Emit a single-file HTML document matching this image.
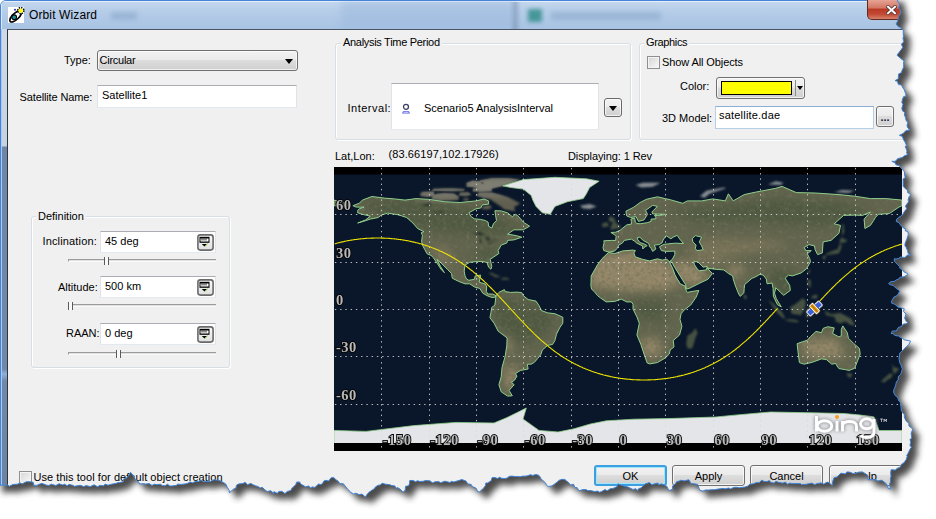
<!DOCTYPE html>
<html><head><meta charset="utf-8">
<style>
*{box-sizing:border-box}
html,body{margin:0;padding:0;width:936px;height:519px;overflow:hidden;background:#fff}
body{position:relative;font-family:"Liberation Sans",sans-serif;font-size:11px;color:#000}
.a{position:absolute;white-space:nowrap}
#win{position:absolute;left:0;top:0;width:936px;height:519px;border-radius:6px 6px 0 0;background:#b0c8e4;border:1px solid #4584d8;overflow:hidden}
#title{position:absolute;left:0;top:0;width:936px;height:29px;background:linear-gradient(#c4d8ee,#b6cde8 35%,#a7c2e3);box-shadow:inset 0 1px 0 #e6eef8,inset 1px 0 0 #dde8f4}
#lframe{position:absolute;left:0;top:28px;width:7px;height:491px;background:linear-gradient(#cfdae6,#c6d2e0 117px,#6e87a6 118px,#7089a8 340px,#8fb0dc 345px,#7089a8 352px,#6a82a0);border-left:1px solid #a8c8f0}
#client{position:absolute;left:7px;top:29px;width:929px;height:490px;background:#f0f0f0;border-top:1px solid #4a5564;border-left:1px solid #2e3540}
.lbl{position:absolute;white-space:nowrap;font-size:11px;line-height:13px;color:#000}
.tb{position:absolute;background:#fff;border:1px solid #abadb3;border-left-color:#e2e3ea;border-right-color:#e2e3ea;border-bottom-color:#e3e9ef;font-size:11px;line-height:13px;padding:2px 0 0 4px}
.grp{position:absolute;border:1px solid #d5dfe5;border-radius:3px;box-shadow:inset 1px 1px 0 #fff,1px 1px 0 #fff}
.grpt{position:absolute;background:#f0f0f0;padding:0 2px;font-size:11px;line-height:13px;white-space:nowrap}
.btn{position:absolute;border:1px solid #707070;border-radius:3px;background:linear-gradient(#f2f2f2,#ebebeb 45%,#dddddd 50%,#cfcfcf);text-align:center;font-size:11px;line-height:13px;padding-top:3px;box-shadow:inset 0 0 0 1px rgba(255,255,255,.7)}
.chk{position:absolute;width:13px;height:13px;border:1px solid #8e8f8f;background:linear-gradient(135deg,#d5d5d5,#f9f9f9);box-shadow:inset 0 0 0 1px #f4f4f4}
.trk{position:absolute;height:3px;border-top:1px solid #9c9c9c;border-left:1px solid #9c9c9c;border-bottom:1px solid #fbfbfb;background:#e0e0e0}
.thm{position:absolute;width:5px;height:8px;border-left:1px solid #5a5a5a;border-right:1px solid #5a5a5a;background:#fafafa}
.sb{position:absolute;width:17px;height:17px}
.sb i{position:absolute;left:1px;top:1px;width:10px;height:6px;background:#000}
.sb b{position:absolute;left:2px;top:2px;width:6px;height:2px;border-left:1px solid #fff;border-right:1px solid #fff}
.sb s{position:absolute;left:3px;top:8px;width:0;height:0;border-left:3px solid transparent;border-right:3px solid transparent;border-top:3px solid #000}
</style></head><body>
<div id="win">
 <div id="title"></div>
 <div class="a" style="left:508px;top:1px;width:12px;height:27px;background:linear-gradient(90deg,rgba(80,100,130,0),rgba(80,100,130,.35),rgba(80,100,130,0))"></div>
 <div class="a" style="left:527px;top:8px;width:14px;height:13px;background:#2c8a86;filter:blur(2px);opacity:.8"></div>
 <div class="a" style="left:550px;top:11px;width:110px;height:8px;background:#86a4c8;filter:blur(2.5px);opacity:.55"></div>
 <div class="a" style="left:110px;top:11px;width:26px;height:8px;background:#8aa8cc;filter:blur(2px);opacity:.6"></div>
 <div class="a" style="left:340px;top:0;width:175px;height:28px;background:#98b6dc;filter:blur(4px);opacity:.45"></div>
 <div id="lframe"></div>
</div>
<div class="a" style="left:8px;top:7px;width:16px;height:16px;background:#fff"></div>
<svg class="a" style="left:8px;top:7px" width="17" height="17" viewBox="0 0 17 17">
 <path d="M9.5,4.2 C6,6 1.5,10.5 1.8,13.6 C2.2,16.2 6.5,15 10,11.5 C11.8,9.8 12.8,8.2 13.2,7" fill="none" stroke="#000" stroke-width="1.7" stroke-linecap="round"/>
 <circle cx="6.2" cy="10.2" r="2.3" fill="#1c9fd0" stroke="#000" stroke-width="1.1"/>
 <rect x="5.6" y="9.6" width="1.6" height="1.6" fill="#2a8a40"/>
 <circle cx="12.8" cy="3.6" r="3" fill="none" stroke="#000" stroke-width="1.6" stroke-dasharray="1.3 1.05"/>
 <circle cx="12.8" cy="3.6" r="2.2" fill="#ffff00"/>
 <circle cx="7" cy="2.7" r="1" fill="#1a2ac0"/>
</svg>
<div class="a" style="left:29px;top:7.5px;font-size:12px;line-height:15px;color:#000;letter-spacing:0.12px">Orbit Wizard</div>
<div class="a" style="left:867px;top:0px;width:50px;height:20px;border:1px solid #5e2a22;border-top:none;border-radius:0 0 5px 5px;background:linear-gradient(#e6a395,#d47866 40%,#bb3a24 50%,#c14a34 75%,#d9826a)"></div>
<svg class="a" style="left:886px;top:5px" width="11" height="10" viewBox="0 0 11 10"><path d="M2,1.8 L9,8.2 M9,1.8 L2,8.2" stroke="#5a3a36" stroke-width="3.6" stroke-linecap="square"/><path d="M2,1.8 L9,8.2 M9,1.8 L2,8.2" stroke="#fff" stroke-width="2" stroke-linecap="square"/></svg>
<div id="client"></div>

<!-- left controls -->
<div class="lbl" style="left:64px;top:54px">Type:</div>
<div class="btn" style="left:97px;top:50px;width:201px;height:21px;text-align:left;padding-left:1.5px;padding-top:3px;letter-spacing:-0.25px">Circular</div>
<div class="a" style="left:285px;top:59px;width:0;height:0;border-left:4px solid transparent;border-right:4px solid transparent;border-top:5px solid #000"></div>
<div class="lbl" style="left:19.5px;top:91px;letter-spacing:-0.12px">Satellite Name:</div>
<div class="tb" style="left:97px;top:85px;width:200px;height:23px;padding-left:4px;padding-top:2.5px">Satellite1</div>

<div class="grp" style="left:31px;top:216px;width:199px;height:152px"></div>
<div class="grpt" style="left:36px;top:210px">Definition</div>

<div class="lbl" style="left:42.5px;top:234.5px;letter-spacing:0.15px">Inclination:</div>
<div class="tb" style="left:100px;top:231px;width:116px;height:22px;padding-top:3px">45 deg</div>
<div class="sb" style="left:197px;top:234px"><svg width="17" height="17" viewBox="0 0 17 17" style="position:absolute;left:0;top:0"><defs><linearGradient id="sbg" x1="0" y1="0" x2="0" y2="1"><stop offset="0" stop-color="#fbfbfb"/><stop offset="1" stop-color="#dedede"/></linearGradient></defs><rect x="0.9" y="0.9" width="15.2" height="15.2" rx="2.5" fill="url(#sbg)" stroke="#6a6a6a" stroke-width="1.6"/><rect x="2.5" y="2.8" width="10" height="6" fill="#000"/><rect x="3.5" y="4.5" width="8" height="3" fill="#fff"/><path d="M5,4.5 V6.5 M7,4.5 V6.5 M9,4.5 V6.5" stroke="#000" stroke-width="0.9"/><path d="M4.8,10 H10 L7.4,12.6 Z" fill="#000"/><path d="M8,12.2 L10.6,9.8" stroke="#7cc020" stroke-width="1"/></svg></div>
<div class="trk" style="left:68px;top:259px;width:148px"></div>
<div class="thm" style="left:104px;top:257px"></div>

<div class="lbl" style="left:58px;top:280.5px">Altitude:</div>
<div class="tb" style="left:100px;top:276px;width:116px;height:22px;padding-top:3px">500 km</div>
<div class="sb" style="left:197px;top:279px"><svg width="17" height="17" viewBox="0 0 17 17" style="position:absolute;left:0;top:0"><defs><linearGradient id="sbg" x1="0" y1="0" x2="0" y2="1"><stop offset="0" stop-color="#fbfbfb"/><stop offset="1" stop-color="#dedede"/></linearGradient></defs><rect x="0.9" y="0.9" width="15.2" height="15.2" rx="2.5" fill="url(#sbg)" stroke="#6a6a6a" stroke-width="1.6"/><rect x="2.5" y="2.8" width="10" height="6" fill="#000"/><rect x="3.5" y="4.5" width="8" height="3" fill="#fff"/><path d="M5,4.5 V6.5 M7,4.5 V6.5 M9,4.5 V6.5" stroke="#000" stroke-width="0.9"/><path d="M4.8,10 H10 L7.4,12.6 Z" fill="#000"/><path d="M8,12.2 L10.6,9.8" stroke="#7cc020" stroke-width="1"/></svg></div>
<div class="trk" style="left:68px;top:304px;width:148px"></div>
<div class="thm" style="left:68px;top:302px"></div>

<div class="lbl" style="left:66px;top:327px">RAAN:</div>
<div class="tb" style="left:100px;top:323px;width:116px;height:22px;padding-top:3px">0 deg</div>
<div class="sb" style="left:197px;top:326px"><svg width="17" height="17" viewBox="0 0 17 17" style="position:absolute;left:0;top:0"><defs><linearGradient id="sbg" x1="0" y1="0" x2="0" y2="1"><stop offset="0" stop-color="#fbfbfb"/><stop offset="1" stop-color="#dedede"/></linearGradient></defs><rect x="0.9" y="0.9" width="15.2" height="15.2" rx="2.5" fill="url(#sbg)" stroke="#6a6a6a" stroke-width="1.6"/><rect x="2.5" y="2.8" width="10" height="6" fill="#000"/><rect x="3.5" y="4.5" width="8" height="3" fill="#fff"/><path d="M5,4.5 V6.5 M7,4.5 V6.5 M9,4.5 V6.5" stroke="#000" stroke-width="0.9"/><path d="M4.8,10 H10 L7.4,12.6 Z" fill="#000"/><path d="M8,12.2 L10.6,9.8" stroke="#7cc020" stroke-width="1"/></svg></div>
<div class="trk" style="left:68px;top:352px;width:148px"></div>
<div class="thm" style="left:116px;top:350px"></div>

<div class="chk" style="left:19px;top:471px"></div>
<div class="lbl" style="left:33.5px;top:471px;letter-spacing:0.05px">Use this tool for default object creation</div>

<!-- analysis time period -->
<div class="grp" style="left:335px;top:43px;width:296px;height:97px"></div>
<div class="grpt" style="left:341px;top:36px;letter-spacing:-0.3px">Analysis Time Period</div>
<div class="lbl" style="left:347.5px;top:102px;letter-spacing:0.5px">Interval:</div>
<div class="tb" style="left:391px;top:83px;width:208px;height:47px"></div>
<svg class="a" style="left:401px;top:103px" width="12" height="12" viewBox="0 0 12 12"><circle cx="5" cy="3.8" r="2.5" fill="#fff" stroke="#3c3c64" stroke-width="1.3"/><path d="M2,8.2 H8 L9,10.5 H1 Z" fill="#5c5ce8"/><rect x="2.5" y="9" width="5" height="0.9" fill="#c8c8ff"/></svg>
<div class="lbl" style="left:424px;top:102px">Scenario5 AnalysisInterval</div>
<div class="btn" style="left:604px;top:98px;width:18px;height:19px;border-color:#6a6a6a"></div>
<div class="a" style="left:609px;top:106px;width:0;height:0;border-left:4px solid transparent;border-right:4px solid transparent;border-top:5px solid #000"></div>

<!-- graphics -->
<div class="grp" style="left:639px;top:43px;width:270px;height:97px"></div>
<div class="grpt" style="left:644px;top:36px;letter-spacing:-0.35px">Graphics</div>
<div class="chk" style="left:647px;top:56px"></div>
<div class="lbl" style="left:662px;top:55.5px;letter-spacing:-0.1px">Show All Objects</div>
<div class="lbl" style="left:680px;top:80px">Color:</div>
<div class="btn" style="left:716px;top:77px;width:89px;height:22px"></div>
<div class="a" style="left:721px;top:81px;width:71px;height:14px;background:#ffff00;border:1px solid #000"></div>
<div class="a" style="left:795px;top:80px;width:1px;height:16px;background:#8a8a8a"></div>
<div class="a" style="left:797px;top:86px;width:0;height:0;border-left:3px solid transparent;border-right:3px solid transparent;border-top:4px solid #000"></div>
<div class="lbl" style="left:662px;top:112px">3D Model:</div>
<div class="tb" style="left:715px;top:106px;width:159px;height:23px;padding-left:3px;padding-top:2px;letter-spacing:0.2px;border-color:#8aaed4 #b4cfe8 #b4cfe8 #b4cfe8">satellite.dae</div>
<div class="btn" style="left:876px;top:106px;width:18px;height:21px;padding-top:4px;letter-spacing:0px;font-weight:bold;color:#202040">...</div>

<div class="lbl" style="left:335px;top:150px">Lat,Lon:</div>
<div class="lbl" style="left:388.5px;top:148px;letter-spacing:0.1px">(83.66197,102.17926)</div>
<div class="lbl" style="left:568px;top:149.5px;letter-spacing:-0.1px">Displaying: 1 Rev</div>

<svg id="map" width="568" height="284" viewBox="0 0 568 284" style="position:absolute;left:334px;top:167px">
<defs>
<clipPath id="archclip"><path d="M86.8,29.2 L94.7,30.0 L101.0,28.4 L99.4,24.5 L88.4,24.8 L86.0,26.8Z M97.8,32.3 L105.7,33.9 L116.8,33.4 L124.6,33.1 L124.6,29.2 L119.9,26.5 L110.4,26.0 L102.6,26.8 L97.8,30.0Z M124.6,28.4 L132.5,29.2 L137.3,27.6 L134.1,25.2 L126.2,25.6Z M128.6,33.1 L134.1,33.9 L134.9,31.6 L130.2,31.2Z M97.8,23.7 L107.3,24.0 L118.3,24.3 L129.4,24.0 L131.0,22.1 L119.9,21.3 L110.4,21.3 L99.4,21.8Z M132.5,19.7 L142.0,20.5 L148.3,18.1 L146.7,14.2 L138.8,13.4 L132.5,15.8Z M138.8,24.5 L148.3,24.8 L157.8,24.3 L157.8,21.3 L145.2,20.8 L138.8,21.8Z M142.0,21.6 L157.8,21.8 L165.7,19.7 L173.6,18.1 L186.2,12.6 L173.6,11.0 L157.8,11.0 L145.2,13.4 L149.9,16.6 L142.0,18.1Z M142.0,28.4 L149.9,31.2 L156.2,32.3 L160.9,35.5 L167.2,39.8 L170.4,42.6 L181.4,44.2 L179.9,40.2 L186.2,36.6 L178.3,32.3 L173.6,30.0 L165.7,27.6 L157.8,25.6 L145.2,25.6Z M146.7,41.8 L149.9,38.7 L156.2,37.9 L157.8,41.0 L153.0,42.6Z"/></clipPath>
<clipPath id="landclip"><path d="M18.9,38.7 L25.2,36.3 L28.4,33.1 L37.9,29.5 L50.5,31.1 L61.5,32.0 L71.0,33.1 L82.0,31.6 L94.7,32.3 L110.4,34.7 L126.2,35.5 L134.1,34.7 L142.0,33.9 L149.9,32.0 L154.6,33.9 L154.6,37.1 L148.3,37.9 L146.7,41.0 L142.0,41.8 L134.9,45.8 L137.3,49.7 L140.4,51.8 L146.7,52.4 L151.5,53.6 L154.1,55.2 L154.6,59.2 L157.8,61.1 L159.4,56.8 L162.5,53.6 L161.7,48.9 L160.9,43.7 L167.2,43.9 L173.6,45.8 L178.3,49.7 L181.4,47.3 L183.0,48.1 L186.2,51.3 L189.3,55.2 L195.6,59.2 L189.3,62.8 L179.9,62.8 L173.6,67.1 L182.2,68.6 L187.8,70.2 L179.9,72.9 L173.6,73.4 L172.8,76.0 L167.2,78.1 L164.1,83.6 L164.9,86.5 L156.2,92.3 L157.8,99.4 L157.0,102.2 L154.6,100.2 L153.0,95.5 L149.9,94.7 L143.6,94.4 L135.7,95.3 L131.0,98.1 L130.2,104.1 L131.0,108.9 L132.5,112.0 L134.9,113.3 L140.4,112.3 L141.2,108.9 L146.7,108.1 L145.2,115.2 L151.5,117.1 L152.7,119.9 L152.3,124.6 L153.8,127.0 L158.6,127.0 L162.0,128.6 L160.9,130.2 L157.8,130.5 L153.0,128.6 L148.8,126.2 L145.9,121.5 L140.4,119.9 L135.7,116.8 L131.0,116.8 L124.6,114.4 L118.3,111.2 L117.5,106.5 L113.6,102.6 L107.3,96.2 L102.9,92.3 L106.5,99.4 L110.4,105.7 L107.3,102.6 L104.1,97.8 L99.4,90.7 L97.0,88.4 L93.1,86.8 L90.7,82.4 L88.4,78.1 L87.6,74.2 L88.4,68.6 L87.3,65.6 L89.9,64.7 L83.6,61.5 L78.9,56.0 L72.6,50.5 L67.8,48.9 L63.1,47.6 L53.6,46.1 L47.3,48.1 L44.2,50.5 L36.3,52.1 L28.4,54.7 L23.7,56.0 L31.6,52.9 L36.3,49.2 L28.4,47.3 L23.7,45.8 L23.7,43.4 L25.2,41.8 L30.0,40.2 L22.1,40.1Z M162.0,128.6 L164.9,125.4 L170.4,122.6 L171.2,124.6 L176.7,125.4 L183.0,125.1 L187.8,125.7 L189.3,128.6 L194.1,132.5 L202.0,134.1 L205.1,138.8 L207.5,143.6 L213.8,145.9 L220.9,146.7 L228.8,150.2 L228.8,156.2 L225.6,160.9 L222.5,167.2 L220.9,173.6 L218.5,177.5 L213.8,178.3 L208.3,183.0 L206.7,187.8 L203.5,191.7 L200.4,195.3 L197.2,197.2 L193.3,197.2 L194.1,202.0 L186.2,203.5 L181.4,206.7 L183.0,209.1 L180.7,213.0 L177.5,215.4 L180.2,217.7 L175.1,223.3 L175.9,224.8 L178.3,228.8 L173.6,229.1 L167.2,224.8 L164.9,217.7 L167.2,209.8 L168.0,200.4 L171.2,189.3 L172.8,178.3 L173.1,170.9 L164.1,164.1 L160.1,156.2 L155.9,150.7 L157.0,145.2 L157.8,140.4 L160.9,138.1 L161.7,131.0Z M274.5,85.5 L268.2,91.5 L263.5,97.8 L257.2,108.9 L256.9,118.8 L257.7,122.3 L260.3,124.6 L263.5,128.6 L266.6,131.0 L272.2,134.9 L280.8,134.4 L287.2,132.1 L292.7,134.9 L297.4,134.9 L299.0,137.3 L299.0,142.0 L302.9,149.9 L305.3,156.2 L302.9,168.0 L306.9,177.5 L310.0,187.0 L313.2,196.0 L315.6,196.9 L323.4,195.6 L331.3,190.9 L335.3,187.0 L336.1,183.0 L340.0,179.9 L339.2,173.6 L345.5,168.0 L347.9,159.4 L346.0,152.3 L347.1,146.7 L350.3,142.8 L356.6,138.1 L362.1,130.2 L364.9,123.4 L359.7,124.2 L353.4,125.4 L352.3,123.9 L351.1,119.1 L346.3,116.8 L343.2,112.0 L340.8,107.3 L339.2,102.6 L336.9,97.8 L335.3,94.7 L332.9,92.3 L328.2,93.1 L323.4,91.8 L315.6,93.9 L308.5,92.3 L301.4,89.9 L299.8,86.0 L301.4,83.6 L299.0,83.1 L288.7,83.9 L280.8,86.5Z M275.2,85.2 L269.8,83.6 L269.0,80.5 L270.1,75.7 L269.8,73.8 L277.7,73.4 L281.6,73.5 L282.1,69.4 L280.1,67.4 L276.9,65.5 L281.6,65.2 L286.4,63.1 L288.7,61.1 L291.1,59.2 L292.7,57.9 L297.4,57.1 L297.4,54.4 L296.9,52.1 L300.6,51.0 L301.4,55.2 L302.9,56.5 L306.1,56.8 L313.2,55.7 L317.1,54.4 L317.1,52.1 L321.9,51.8 L321.9,49.7 L320.3,48.6 L328.2,48.1 L331.3,47.3 L318.7,46.9 L317.9,45.0 L323.4,39.4 L318.7,38.3 L311.6,43.4 L313.5,47.3 L310.0,52.9 L304.5,54.4 L302.1,49.7 L296.6,50.5 L292.7,48.9 L291.9,44.2 L299.8,40.2 L306.1,35.5 L312.4,32.3 L323.4,29.8 L331.3,31.6 L336.1,32.7 L348.7,36.3 L353.4,33.9 L367.6,33.9 L378.7,31.9 L391.3,33.9 L394.4,26.8 L399.2,33.9 L410.2,27.6 L421.3,25.2 L441.8,21.3 L448.1,19.4 L462.3,25.6 L481.2,26.0 L504.9,27.6 L520.7,29.2 L536.4,31.6 L552.2,31.6 L568.0,33.1 L568.0,38.7 L564.8,40.2 L555.4,46.5 L544.3,47.3 L541.2,50.8 L539.6,53.6 L536.4,58.4 L530.9,61.5 L530.1,52.1 L536.4,45.0 L528.6,48.4 L520.7,48.1 L509.6,48.4 L500.2,56.8 L506.5,58.4 L504.9,66.3 L497.0,73.4 L489.1,74.9 L488.3,86.0 L483.6,87.6 L481.2,82.8 L480.4,78.9 L474.9,77.6 L470.2,80.5 L471.8,83.6 L477.3,83.6 L473.3,86.8 L475.7,91.5 L476.5,94.7 L472.5,101.8 L467.0,106.0 L458.3,108.9 L454.4,108.1 L451.2,111.2 L455.7,118.3 L456.3,123.4 L449.7,128.3 L446.5,125.4 L441.8,120.7 L440.5,126.2 L442.3,131.7 L447.3,139.9 L443.4,137.6 L439.4,129.4 L439.1,121.5 L438.1,116.0 L433.1,116.8 L432.3,112.0 L429.2,108.1 L426.0,107.3 L420.5,110.4 L418.1,111.2 L410.7,117.5 L410.2,121.5 L409.9,125.7 L406.3,129.4 L404.7,127.0 L401.5,119.1 L399.2,112.0 L398.7,108.9 L394.4,106.5 L392.4,104.9 L389.7,102.9 L381.0,102.2 L373.9,101.3 L373.1,99.4 L369.2,100.2 L363.7,94.7 L359.7,94.7 L360.5,97.8 L363.7,102.6 L365.3,103.8 L372.4,102.9 L372.8,100.7 L378.4,106.5 L373.9,112.3 L366.0,116.0 L355.0,121.5 L352.3,122.0 L351.5,117.5 L345.5,108.1 L339.2,97.8 L338.4,95.5 L335.3,94.7 L338.4,92.3 L340.8,87.6 L340.8,84.1 L332.1,84.4 L327.4,83.6 L325.5,79.7 L329.8,77.3 L332.9,77.0 L340.8,76.2 L349.5,76.5 L345.5,71.8 L343.2,68.3 L339.2,70.2 L336.9,71.8 L332.1,68.6 L329.0,73.1 L328.2,75.7 L325.0,77.6 L320.3,78.1 L321.9,82.0 L318.7,84.4 L317.1,81.3 L315.6,79.7 L314.8,76.5 L309.2,73.4 L305.8,70.2 L303.4,70.5 L303.7,72.6 L306.1,75.7 L309.2,76.5 L313.2,78.6 L310.0,80.5 L308.8,82.0 L308.5,78.9 L302.9,76.2 L300.6,74.2 L297.4,72.1 L290.3,73.4 L288.7,75.7 L284.8,78.1 L283.2,81.3 L280.8,83.9Z M463.1,176.7 L463.9,183.8 L465.4,195.6 L470.2,197.2 L478.1,195.3 L487.5,191.9 L492.3,192.5 L497.8,197.2 L501.7,196.4 L502.5,198.2 L504.9,201.6 L511.2,202.6 L515.1,203.5 L520.7,201.2 L526.2,187.0 L525.4,181.4 L519.9,176.7 L514.4,171.2 L513.3,165.7 L508.8,158.9 L507.3,162.5 L507.3,168.8 L504.9,169.9 L498.6,166.5 L500.2,160.9 L493.8,159.7 L489.1,161.4 L487.5,165.7 L482.0,164.4 L476.5,169.6 L473.3,173.2 L468.6,174.7Z M0.0,33.1 L7.9,35.5 L15.8,37.1 L12.6,39.4 L0.0,38.7Z"/></clipPath>
<filter id="tex2" x="0" y="0" width="100%" height="100%"><feTurbulence type="fractalNoise" baseFrequency="0.28" numOctaves="3" seed="7"/><feColorMatrix type="matrix" values="0 0 0 0 0.12  0 0 0 0 0.14  0 0 0 0 0.08  1.6 0 0 0 -0.75"/></filter>
<filter id="tex3" x="0" y="0" width="100%" height="100%"><feTurbulence type="fractalNoise" baseFrequency="0.22" numOctaves="2" seed="11"/><feColorMatrix type="matrix" values="0 0 0 0 0.75  0 0 0 0 0.72  0 0 0 0 0.6  1.5 0 0 0 -0.8"/></filter>
<filter id="b1" x="-20%" y="-20%" width="140%" height="140%"><feGaussianBlur stdDeviation="1"/></filter>
<filter id="b4" x="-20%" y="-20%" width="140%" height="140%"><feGaussianBlur stdDeviation="5"/></filter>
<filter id="tex" x="0" y="0" width="100%" height="100%"><feTurbulence type="fractalNoise" baseFrequency="0.35" numOctaves="2" seed="4"/><feColorMatrix type="matrix" values="0 0 0 0 0.5  0 0 0 0 0.5  0 0 0 0 0.45  0 0 0 -1.6 1.1"/></filter>
</defs>
<rect width="568.0" height="284.0" fill="#0a172a"/>
<path d="M353.4,181.4 L358.2,181.4 L362.1,168.8 L363.7,166.5 L361.6,160.9 L358.2,165.7 L353.4,168.8 L352.3,176.7Z M275.0,63.1 L286.4,61.2 L286.7,58.9 L284.0,57.6 L281.6,55.2 L280.8,52.1 L277.7,49.5 L276.1,49.5 L274.5,51.3 L275.3,54.4 L279.3,55.5 L276.1,60.0 L277.7,60.7Z M268.2,60.3 L274.5,59.6 L274.5,56.8 L272.2,54.9 L268.2,56.5Z M490.5,88.4 L497.0,87.6 L504.9,86.5 L507.3,81.3 L507.3,76.5 L504.9,78.1 L504.1,82.0 L499.4,83.6 L493.8,86.0Z M504.9,75.7 L507.3,70.2 L513.6,73.4 L510.4,75.7Z M488.6,89.1 L492.0,89.1 L490.7,93.1 L489.1,92.3Z M508.0,69.4 L510.4,64.7 L509.6,56.8 L508.4,56.8 L508.0,63.1Z M473.6,105.7 L474.9,107.4 L476.5,102.6 L475.7,102.1Z M473.3,112.8 L476.8,112.8 L476.5,119.9 L479.6,121.5 L474.3,119.6Z M476.5,131.0 L482.8,131.7 L483.6,127.5 L478.9,128.6Z M456.0,139.6 L457.6,146.7 L467.0,148.3 L471.0,140.4 L471.8,134.1 L468.6,131.0 L465.4,134.1 L459.1,138.8Z M434.4,133.3 L438.6,135.7 L448.1,145.2 L451.2,151.2 L448.9,151.2 L443.4,145.9 L437.8,138.1Z M450.0,152.7 L459.1,152.3 L464.7,154.1 L464.3,155.4 L454.4,154.3Z M472.5,150.7 L471.8,143.6 L474.1,140.7 L481.2,139.6 L475.7,141.2 L478.5,143.6 L475.7,144.4 L478.1,149.9 L474.9,148.3 L474.1,150.7Z M490.7,143.6 L497.0,147.2 L506.5,145.9 L516.7,151.5 L521.5,158.6 L515.9,157.8 L511.2,154.6 L506.5,156.5 L501.7,154.6 L500.9,149.9 L492.3,148.3Z M512.3,206.2 L518.0,206.5 L517.5,210.2 L514.4,210.6Z M556.5,196.3 L560.9,200.4 L565.6,201.5 L563.3,204.0 L560.1,207.5 L559.3,204.3 L558.2,203.5 L559.3,200.4Z M556.5,205.9 L558.8,207.8 L557.0,211.1 L554.1,212.2 L550.6,215.5 L546.7,214.6 L549.9,211.4 L554.6,207.5Z M409.9,126.5 L413.1,130.2 L411.2,132.7 L409.9,131.0Z M149.9,107.6 L157.0,105.6 L166.9,110.1 L161.7,110.6 L154.6,106.3Z M166.5,112.8 L175.9,112.8 L173.6,110.8 L169.1,110.6Z" fill="#4d5844" filter="url(#b1)" opacity="0.9"/>
<path d="M246.1,38.7 L255.6,37.1 L262.7,39.4 L255.6,42.0 L248.5,41.3Z M301.4,18.1 L309.2,15.8 L326.6,15.8 L318.7,19.7 L307.7,20.5Z M366.0,29.2 L372.4,23.7 L389.7,20.5 L392.1,21.3 L375.5,26.8 L370.8,30.8Z M433.9,17.4 L441.8,14.2 L449.7,15.8 L446.5,18.1Z M500.2,25.2 L508.0,22.9 L520.7,23.7 L514.4,26.0Z" fill="#a8acac" filter="url(#b1)" opacity="0.8"/>
<path d="M86.8,29.2 L94.7,30.0 L101.0,28.4 L99.4,24.5 L88.4,24.8 L86.0,26.8Z M97.8,32.3 L105.7,33.9 L116.8,33.4 L124.6,33.1 L124.6,29.2 L119.9,26.5 L110.4,26.0 L102.6,26.8 L97.8,30.0Z M124.6,28.4 L132.5,29.2 L137.3,27.6 L134.1,25.2 L126.2,25.6Z M128.6,33.1 L134.1,33.9 L134.9,31.6 L130.2,31.2Z M97.8,23.7 L107.3,24.0 L118.3,24.3 L129.4,24.0 L131.0,22.1 L119.9,21.3 L110.4,21.3 L99.4,21.8Z M132.5,19.7 L142.0,20.5 L148.3,18.1 L146.7,14.2 L138.8,13.4 L132.5,15.8Z M138.8,24.5 L148.3,24.8 L157.8,24.3 L157.8,21.3 L145.2,20.8 L138.8,21.8Z M142.0,21.6 L157.8,21.8 L165.7,19.7 L173.6,18.1 L186.2,12.6 L173.6,11.0 L157.8,11.0 L145.2,13.4 L149.9,16.6 L142.0,18.1Z M142.0,28.4 L149.9,31.2 L156.2,32.3 L160.9,35.5 L167.2,39.8 L170.4,42.6 L181.4,44.2 L179.9,40.2 L186.2,36.6 L178.3,32.3 L173.6,30.0 L165.7,27.6 L157.8,25.6 L145.2,25.6Z M146.7,41.8 L149.9,38.7 L156.2,37.9 L157.8,41.0 L153.0,42.6Z" fill="#605e50" filter="url(#b1)"/>
<g clip-path="url(#archclip)"><path d="M134.1,28.4 L189.3,28.4 L186.2,9.5 L126.2,9.5Z M86.8,31.6 L126.2,31.6 L126.2,20.5 L86.8,20.5Z" fill="#c8cac8" filter="url(#b4)" opacity="0.3"/></g>
<path d="M18.9,38.7 L25.2,36.3 L28.4,33.1 L37.9,29.5 L50.5,31.1 L61.5,32.0 L71.0,33.1 L82.0,31.6 L94.7,32.3 L110.4,34.7 L126.2,35.5 L134.1,34.7 L142.0,33.9 L149.9,32.0 L154.6,33.9 L154.6,37.1 L148.3,37.9 L146.7,41.0 L142.0,41.8 L134.9,45.8 L137.3,49.7 L140.4,51.8 L146.7,52.4 L151.5,53.6 L154.1,55.2 L154.6,59.2 L157.8,61.1 L159.4,56.8 L162.5,53.6 L161.7,48.9 L160.9,43.7 L167.2,43.9 L173.6,45.8 L178.3,49.7 L181.4,47.3 L183.0,48.1 L186.2,51.3 L189.3,55.2 L195.6,59.2 L189.3,62.8 L179.9,62.8 L173.6,67.1 L182.2,68.6 L187.8,70.2 L179.9,72.9 L173.6,73.4 L172.8,76.0 L167.2,78.1 L164.1,83.6 L164.9,86.5 L156.2,92.3 L157.8,99.4 L157.0,102.2 L154.6,100.2 L153.0,95.5 L149.9,94.7 L143.6,94.4 L135.7,95.3 L131.0,98.1 L130.2,104.1 L131.0,108.9 L132.5,112.0 L134.9,113.3 L140.4,112.3 L141.2,108.9 L146.7,108.1 L145.2,115.2 L151.5,117.1 L152.7,119.9 L152.3,124.6 L153.8,127.0 L158.6,127.0 L162.0,128.6 L160.9,130.2 L157.8,130.5 L153.0,128.6 L148.8,126.2 L145.9,121.5 L140.4,119.9 L135.7,116.8 L131.0,116.8 L124.6,114.4 L118.3,111.2 L117.5,106.5 L113.6,102.6 L107.3,96.2 L102.9,92.3 L106.5,99.4 L110.4,105.7 L107.3,102.6 L104.1,97.8 L99.4,90.7 L97.0,88.4 L93.1,86.8 L90.7,82.4 L88.4,78.1 L87.6,74.2 L88.4,68.6 L87.3,65.6 L89.9,64.7 L83.6,61.5 L78.9,56.0 L72.6,50.5 L67.8,48.9 L63.1,47.6 L53.6,46.1 L47.3,48.1 L44.2,50.5 L36.3,52.1 L28.4,54.7 L23.7,56.0 L31.6,52.9 L36.3,49.2 L28.4,47.3 L23.7,45.8 L23.7,43.4 L25.2,41.8 L30.0,40.2 L22.1,40.1Z M162.0,128.6 L164.9,125.4 L170.4,122.6 L171.2,124.6 L176.7,125.4 L183.0,125.1 L187.8,125.7 L189.3,128.6 L194.1,132.5 L202.0,134.1 L205.1,138.8 L207.5,143.6 L213.8,145.9 L220.9,146.7 L228.8,150.2 L228.8,156.2 L225.6,160.9 L222.5,167.2 L220.9,173.6 L218.5,177.5 L213.8,178.3 L208.3,183.0 L206.7,187.8 L203.5,191.7 L200.4,195.3 L197.2,197.2 L193.3,197.2 L194.1,202.0 L186.2,203.5 L181.4,206.7 L183.0,209.1 L180.7,213.0 L177.5,215.4 L180.2,217.7 L175.1,223.3 L175.9,224.8 L178.3,228.8 L173.6,229.1 L167.2,224.8 L164.9,217.7 L167.2,209.8 L168.0,200.4 L171.2,189.3 L172.8,178.3 L173.1,170.9 L164.1,164.1 L160.1,156.2 L155.9,150.7 L157.0,145.2 L157.8,140.4 L160.9,138.1 L161.7,131.0Z M274.5,85.5 L268.2,91.5 L263.5,97.8 L257.2,108.9 L256.9,118.8 L257.7,122.3 L260.3,124.6 L263.5,128.6 L266.6,131.0 L272.2,134.9 L280.8,134.4 L287.2,132.1 L292.7,134.9 L297.4,134.9 L299.0,137.3 L299.0,142.0 L302.9,149.9 L305.3,156.2 L302.9,168.0 L306.9,177.5 L310.0,187.0 L313.2,196.0 L315.6,196.9 L323.4,195.6 L331.3,190.9 L335.3,187.0 L336.1,183.0 L340.0,179.9 L339.2,173.6 L345.5,168.0 L347.9,159.4 L346.0,152.3 L347.1,146.7 L350.3,142.8 L356.6,138.1 L362.1,130.2 L364.9,123.4 L359.7,124.2 L353.4,125.4 L352.3,123.9 L351.1,119.1 L346.3,116.8 L343.2,112.0 L340.8,107.3 L339.2,102.6 L336.9,97.8 L335.3,94.7 L332.9,92.3 L328.2,93.1 L323.4,91.8 L315.6,93.9 L308.5,92.3 L301.4,89.9 L299.8,86.0 L301.4,83.6 L299.0,83.1 L288.7,83.9 L280.8,86.5Z M275.2,85.2 L269.8,83.6 L269.0,80.5 L270.1,75.7 L269.8,73.8 L277.7,73.4 L281.6,73.5 L282.1,69.4 L280.1,67.4 L276.9,65.5 L281.6,65.2 L286.4,63.1 L288.7,61.1 L291.1,59.2 L292.7,57.9 L297.4,57.1 L297.4,54.4 L296.9,52.1 L300.6,51.0 L301.4,55.2 L302.9,56.5 L306.1,56.8 L313.2,55.7 L317.1,54.4 L317.1,52.1 L321.9,51.8 L321.9,49.7 L320.3,48.6 L328.2,48.1 L331.3,47.3 L318.7,46.9 L317.9,45.0 L323.4,39.4 L318.7,38.3 L311.6,43.4 L313.5,47.3 L310.0,52.9 L304.5,54.4 L302.1,49.7 L296.6,50.5 L292.7,48.9 L291.9,44.2 L299.8,40.2 L306.1,35.5 L312.4,32.3 L323.4,29.8 L331.3,31.6 L336.1,32.7 L348.7,36.3 L353.4,33.9 L367.6,33.9 L378.7,31.9 L391.3,33.9 L394.4,26.8 L399.2,33.9 L410.2,27.6 L421.3,25.2 L441.8,21.3 L448.1,19.4 L462.3,25.6 L481.2,26.0 L504.9,27.6 L520.7,29.2 L536.4,31.6 L552.2,31.6 L568.0,33.1 L568.0,38.7 L564.8,40.2 L555.4,46.5 L544.3,47.3 L541.2,50.8 L539.6,53.6 L536.4,58.4 L530.9,61.5 L530.1,52.1 L536.4,45.0 L528.6,48.4 L520.7,48.1 L509.6,48.4 L500.2,56.8 L506.5,58.4 L504.9,66.3 L497.0,73.4 L489.1,74.9 L488.3,86.0 L483.6,87.6 L481.2,82.8 L480.4,78.9 L474.9,77.6 L470.2,80.5 L471.8,83.6 L477.3,83.6 L473.3,86.8 L475.7,91.5 L476.5,94.7 L472.5,101.8 L467.0,106.0 L458.3,108.9 L454.4,108.1 L451.2,111.2 L455.7,118.3 L456.3,123.4 L449.7,128.3 L446.5,125.4 L441.8,120.7 L440.5,126.2 L442.3,131.7 L447.3,139.9 L443.4,137.6 L439.4,129.4 L439.1,121.5 L438.1,116.0 L433.1,116.8 L432.3,112.0 L429.2,108.1 L426.0,107.3 L420.5,110.4 L418.1,111.2 L410.7,117.5 L410.2,121.5 L409.9,125.7 L406.3,129.4 L404.7,127.0 L401.5,119.1 L399.2,112.0 L398.7,108.9 L394.4,106.5 L392.4,104.9 L389.7,102.9 L381.0,102.2 L373.9,101.3 L373.1,99.4 L369.2,100.2 L363.7,94.7 L359.7,94.7 L360.5,97.8 L363.7,102.6 L365.3,103.8 L372.4,102.9 L372.8,100.7 L378.4,106.5 L373.9,112.3 L366.0,116.0 L355.0,121.5 L352.3,122.0 L351.5,117.5 L345.5,108.1 L339.2,97.8 L338.4,95.5 L335.3,94.7 L338.4,92.3 L340.8,87.6 L340.8,84.1 L332.1,84.4 L327.4,83.6 L325.5,79.7 L329.8,77.3 L332.9,77.0 L340.8,76.2 L349.5,76.5 L345.5,71.8 L343.2,68.3 L339.2,70.2 L336.9,71.8 L332.1,68.6 L329.0,73.1 L328.2,75.7 L325.0,77.6 L320.3,78.1 L321.9,82.0 L318.7,84.4 L317.1,81.3 L315.6,79.7 L314.8,76.5 L309.2,73.4 L305.8,70.2 L303.4,70.5 L303.7,72.6 L306.1,75.7 L309.2,76.5 L313.2,78.6 L310.0,80.5 L308.8,82.0 L308.5,78.9 L302.9,76.2 L300.6,74.2 L297.4,72.1 L290.3,73.4 L288.7,75.7 L284.8,78.1 L283.2,81.3 L280.8,83.9Z M463.1,176.7 L463.9,183.8 L465.4,195.6 L470.2,197.2 L478.1,195.3 L487.5,191.9 L492.3,192.5 L497.8,197.2 L501.7,196.4 L502.5,198.2 L504.9,201.6 L511.2,202.6 L515.1,203.5 L520.7,201.2 L526.2,187.0 L525.4,181.4 L519.9,176.7 L514.4,171.2 L513.3,165.7 L508.8,158.9 L507.3,162.5 L507.3,168.8 L504.9,169.9 L498.6,166.5 L500.2,160.9 L493.8,159.7 L489.1,161.4 L487.5,165.7 L482.0,164.4 L476.5,169.6 L473.3,173.2 L468.6,174.7Z M0.0,33.1 L7.9,35.5 L15.8,37.1 L12.6,39.4 L0.0,38.7Z" fill="#62644d"/>
<g clip-path="url(#landclip)">
<path d="M255.6,119.9 L255.6,97.8 L271.4,86.8 L299.8,85.2 L323.4,89.9 L337.6,101.0 L347.1,116.8 L331.3,123.1 L307.7,124.6 L284.0,123.1Z M339.2,97.8 L347.1,93.1 L359.7,96.2 L372.4,105.7 L373.9,113.6 L355.0,119.9 L345.5,110.4Z M467.0,173.6 L501.7,172.0 L512.8,189.3 L497.0,190.9 L471.8,189.3Z M306.1,172.0 L325.0,172.0 L328.2,186.2 L310.8,190.9Z M172.0,198.8 L184.6,202.0 L179.9,220.9 L170.4,220.9Z M170.4,165.7 L176.7,167.2 L178.3,184.6 L172.0,186.2Z M391.3,101.0 L407.1,97.8 L410.2,107.3 L397.6,110.4Z" fill="#948667" filter="url(#b4)"/>
<path d="M97.8,78.9 L113.6,78.9 L119.9,94.7 L110.4,101.0 L101.0,91.5Z M353.4,83.6 L370.8,72.6 L386.6,71.0 L410.2,72.6 L433.9,72.6 L449.7,75.7 L457.6,80.5 L429.2,83.6 L402.3,88.4 L381.8,99.4 L362.9,94.7Z" fill="#948667" filter="url(#b4)" opacity="0.45"/>
<path d="M160.9,129.4 L205.1,137.3 L220.9,151.5 L208.3,170.4 L186.2,176.7 L165.7,164.1 L157.8,148.3Z M160.9,129.4 L205.1,137.3 L220.9,151.5 L208.3,170.4 L186.2,176.7 L165.7,164.1 L157.8,148.3Z M296.6,132.5 L331.3,134.1 L331.3,154.6 L304.5,151.5Z M433.9,102.6 L457.6,102.6 L473.3,134.1 L520.7,154.6 L441.8,154.6Z M23.7,34.7 L63.1,31.6 L126.2,37.9 L165.7,50.5 L189.3,63.1 L157.8,69.4 L94.7,63.1 L47.3,50.5Z M331.3,44.2 L378.7,37.9 L441.8,31.6 L504.9,34.7 L536.4,44.2 L489.1,60.0 L426.0,55.2 L362.9,55.2Z M149.9,78.9 L165.7,78.9 L157.8,94.7 L138.8,91.5Z" fill="#4a553c" filter="url(#b4)" opacity="0.7"/>
<path d="M134.1,28.4 L189.3,28.4 L186.2,9.5 L126.2,9.5Z M86.8,31.6 L126.2,31.6 L126.2,20.5 L86.8,20.5Z" fill="#b0b2b0" filter="url(#b4)" opacity="0.55"/>
<rect width="568.0" height="284.0" filter="url(#tex2)" opacity="1"/>
<rect width="568.0" height="284.0" filter="url(#tex3)" opacity="0.18"/>
</g>
<path d="M138.8,65.5 L145.2,64.7 L150.7,67.8 L146.7,68.6Z M145.2,69.4 L148.3,75.7 L145.9,76.2Z M151.5,69.4 L157.0,71.8 L153.8,74.2 L151.5,71.0Z M153.0,75.7 L159.4,74.5 L156.2,76.5Z M157.8,73.2 L164.1,72.6 L162.5,73.7Z M86.8,37.9 L97.8,36.3 L94.7,39.4Z M97.8,44.2 L110.4,45.0 L107.3,46.1Z" fill="#1a2420" opacity="0.8" filter="url(#b1)"/>
<path d="M18.9,38.7 L25.2,36.3 L28.4,33.1 L37.9,29.5 L50.5,31.1 L61.5,32.0 L71.0,33.1 L82.0,31.6 L94.7,32.3 L110.4,34.7 L126.2,35.5 L134.1,34.7 L142.0,33.9 L149.9,32.0 L154.6,33.9 L154.6,37.1 L148.3,37.9 L146.7,41.0 L142.0,41.8 L134.9,45.8 L137.3,49.7 L140.4,51.8 L146.7,52.4 L151.5,53.6 L154.1,55.2 L154.6,59.2 L157.8,61.1 L159.4,56.8 L162.5,53.6 L161.7,48.9 L160.9,43.7 L167.2,43.9 L173.6,45.8 L178.3,49.7 L181.4,47.3 L183.0,48.1 L186.2,51.3 L189.3,55.2 L195.6,59.2 L189.3,62.8 L179.9,62.8 L173.6,67.1 L182.2,68.6 L187.8,70.2 L179.9,72.9 L173.6,73.4 L172.8,76.0 L167.2,78.1 L164.1,83.6 L164.9,86.5 L156.2,92.3 L157.8,99.4 L157.0,102.2 L154.6,100.2 L153.0,95.5 L149.9,94.7 L143.6,94.4 L135.7,95.3 L131.0,98.1 L130.2,104.1 L131.0,108.9 L132.5,112.0 L134.9,113.3 L140.4,112.3 L141.2,108.9 L146.7,108.1 L145.2,115.2 L151.5,117.1 L152.7,119.9 L152.3,124.6 L153.8,127.0 L158.6,127.0 L162.0,128.6 L160.9,130.2 L157.8,130.5 L153.0,128.6 L148.8,126.2 L145.9,121.5 L140.4,119.9 L135.7,116.8 L131.0,116.8 L124.6,114.4 L118.3,111.2 L117.5,106.5 L113.6,102.6 L107.3,96.2 L102.9,92.3 L106.5,99.4 L110.4,105.7 L107.3,102.6 L104.1,97.8 L99.4,90.7 L97.0,88.4 L93.1,86.8 L90.7,82.4 L88.4,78.1 L87.6,74.2 L88.4,68.6 L87.3,65.6 L89.9,64.7 L83.6,61.5 L78.9,56.0 L72.6,50.5 L67.8,48.9 L63.1,47.6 L53.6,46.1 L47.3,48.1 L44.2,50.5 L36.3,52.1 L28.4,54.7 L23.7,56.0 L31.6,52.9 L36.3,49.2 L28.4,47.3 L23.7,45.8 L23.7,43.4 L25.2,41.8 L30.0,40.2 L22.1,40.1Z M162.0,128.6 L164.9,125.4 L170.4,122.6 L171.2,124.6 L176.7,125.4 L183.0,125.1 L187.8,125.7 L189.3,128.6 L194.1,132.5 L202.0,134.1 L205.1,138.8 L207.5,143.6 L213.8,145.9 L220.9,146.7 L228.8,150.2 L228.8,156.2 L225.6,160.9 L222.5,167.2 L220.9,173.6 L218.5,177.5 L213.8,178.3 L208.3,183.0 L206.7,187.8 L203.5,191.7 L200.4,195.3 L197.2,197.2 L193.3,197.2 L194.1,202.0 L186.2,203.5 L181.4,206.7 L183.0,209.1 L180.7,213.0 L177.5,215.4 L180.2,217.7 L175.1,223.3 L175.9,224.8 L178.3,228.8 L173.6,229.1 L167.2,224.8 L164.9,217.7 L167.2,209.8 L168.0,200.4 L171.2,189.3 L172.8,178.3 L173.1,170.9 L164.1,164.1 L160.1,156.2 L155.9,150.7 L157.0,145.2 L157.8,140.4 L160.9,138.1 L161.7,131.0Z M274.5,85.5 L268.2,91.5 L263.5,97.8 L257.2,108.9 L256.9,118.8 L257.7,122.3 L260.3,124.6 L263.5,128.6 L266.6,131.0 L272.2,134.9 L280.8,134.4 L287.2,132.1 L292.7,134.9 L297.4,134.9 L299.0,137.3 L299.0,142.0 L302.9,149.9 L305.3,156.2 L302.9,168.0 L306.9,177.5 L310.0,187.0 L313.2,196.0 L315.6,196.9 L323.4,195.6 L331.3,190.9 L335.3,187.0 L336.1,183.0 L340.0,179.9 L339.2,173.6 L345.5,168.0 L347.9,159.4 L346.0,152.3 L347.1,146.7 L350.3,142.8 L356.6,138.1 L362.1,130.2 L364.9,123.4 L359.7,124.2 L353.4,125.4 L352.3,123.9 L351.1,119.1 L346.3,116.8 L343.2,112.0 L340.8,107.3 L339.2,102.6 L336.9,97.8 L335.3,94.7 L332.9,92.3 L328.2,93.1 L323.4,91.8 L315.6,93.9 L308.5,92.3 L301.4,89.9 L299.8,86.0 L301.4,83.6 L299.0,83.1 L288.7,83.9 L280.8,86.5Z M275.2,85.2 L269.8,83.6 L269.0,80.5 L270.1,75.7 L269.8,73.8 L277.7,73.4 L281.6,73.5 L282.1,69.4 L280.1,67.4 L276.9,65.5 L281.6,65.2 L286.4,63.1 L288.7,61.1 L291.1,59.2 L292.7,57.9 L297.4,57.1 L297.4,54.4 L296.9,52.1 L300.6,51.0 L301.4,55.2 L302.9,56.5 L306.1,56.8 L313.2,55.7 L317.1,54.4 L317.1,52.1 L321.9,51.8 L321.9,49.7 L320.3,48.6 L328.2,48.1 L331.3,47.3 L318.7,46.9 L317.9,45.0 L323.4,39.4 L318.7,38.3 L311.6,43.4 L313.5,47.3 L310.0,52.9 L304.5,54.4 L302.1,49.7 L296.6,50.5 L292.7,48.9 L291.9,44.2 L299.8,40.2 L306.1,35.5 L312.4,32.3 L323.4,29.8 L331.3,31.6 L336.1,32.7 L348.7,36.3 L353.4,33.9 L367.6,33.9 L378.7,31.9 L391.3,33.9 L394.4,26.8 L399.2,33.9 L410.2,27.6 L421.3,25.2 L441.8,21.3 L448.1,19.4 L462.3,25.6 L481.2,26.0 L504.9,27.6 L520.7,29.2 L536.4,31.6 L552.2,31.6 L568.0,33.1 L568.0,38.7 L564.8,40.2 L555.4,46.5 L544.3,47.3 L541.2,50.8 L539.6,53.6 L536.4,58.4 L530.9,61.5 L530.1,52.1 L536.4,45.0 L528.6,48.4 L520.7,48.1 L509.6,48.4 L500.2,56.8 L506.5,58.4 L504.9,66.3 L497.0,73.4 L489.1,74.9 L488.3,86.0 L483.6,87.6 L481.2,82.8 L480.4,78.9 L474.9,77.6 L470.2,80.5 L471.8,83.6 L477.3,83.6 L473.3,86.8 L475.7,91.5 L476.5,94.7 L472.5,101.8 L467.0,106.0 L458.3,108.9 L454.4,108.1 L451.2,111.2 L455.7,118.3 L456.3,123.4 L449.7,128.3 L446.5,125.4 L441.8,120.7 L440.5,126.2 L442.3,131.7 L447.3,139.9 L443.4,137.6 L439.4,129.4 L439.1,121.5 L438.1,116.0 L433.1,116.8 L432.3,112.0 L429.2,108.1 L426.0,107.3 L420.5,110.4 L418.1,111.2 L410.7,117.5 L410.2,121.5 L409.9,125.7 L406.3,129.4 L404.7,127.0 L401.5,119.1 L399.2,112.0 L398.7,108.9 L394.4,106.5 L392.4,104.9 L389.7,102.9 L381.0,102.2 L373.9,101.3 L373.1,99.4 L369.2,100.2 L363.7,94.7 L359.7,94.7 L360.5,97.8 L363.7,102.6 L365.3,103.8 L372.4,102.9 L372.8,100.7 L378.4,106.5 L373.9,112.3 L366.0,116.0 L355.0,121.5 L352.3,122.0 L351.5,117.5 L345.5,108.1 L339.2,97.8 L338.4,95.5 L335.3,94.7 L338.4,92.3 L340.8,87.6 L340.8,84.1 L332.1,84.4 L327.4,83.6 L325.5,79.7 L329.8,77.3 L332.9,77.0 L340.8,76.2 L349.5,76.5 L345.5,71.8 L343.2,68.3 L339.2,70.2 L336.9,71.8 L332.1,68.6 L329.0,73.1 L328.2,75.7 L325.0,77.6 L320.3,78.1 L321.9,82.0 L318.7,84.4 L317.1,81.3 L315.6,79.7 L314.8,76.5 L309.2,73.4 L305.8,70.2 L303.4,70.5 L303.7,72.6 L306.1,75.7 L309.2,76.5 L313.2,78.6 L310.0,80.5 L308.8,82.0 L308.5,78.9 L302.9,76.2 L300.6,74.2 L297.4,72.1 L290.3,73.4 L288.7,75.7 L284.8,78.1 L283.2,81.3 L280.8,83.9Z M463.1,176.7 L463.9,183.8 L465.4,195.6 L470.2,197.2 L478.1,195.3 L487.5,191.9 L492.3,192.5 L497.8,197.2 L501.7,196.4 L502.5,198.2 L504.9,201.6 L511.2,202.6 L515.1,203.5 L520.7,201.2 L526.2,187.0 L525.4,181.4 L519.9,176.7 L514.4,171.2 L513.3,165.7 L508.8,158.9 L507.3,162.5 L507.3,168.8 L504.9,169.9 L498.6,166.5 L500.2,160.9 L493.8,159.7 L489.1,161.4 L487.5,165.7 L482.0,164.4 L476.5,169.6 L473.3,173.2 L468.6,174.7Z M0.0,33.1 L7.9,35.5 L15.8,37.1 L12.6,39.4 L0.0,38.7Z" fill="none" stroke="#8fcf8a" stroke-width="1"/>
<path d="M358.2,71.8 L361.3,68.6 L367.6,70.2 L365.3,74.9 L367.6,78.9 L369.2,82.8 L362.9,83.6 L361.3,81.3 L362.1,78.1 L358.9,74.9Z" fill="#0a172a" stroke="#8fcf8a" stroke-width="1"/>
<path d="M168.8,18.9 L189.3,12.6 L220.9,10.3 L252.4,11.8 L265.1,14.2 L255.6,20.5 L252.4,26.8 L249.3,31.6 L233.5,34.7 L220.9,39.4 L216.2,47.3 L208.3,45.8 L202.0,39.4 L198.8,33.1 L197.2,28.4 L189.3,22.1 L176.7,20.5Z M0.0,263.4 L32.0,264.4 L80.0,258.6 L121.8,255.4 L160.0,256.0 L173.0,250.6 L182.7,245.8 L192.3,241.0 L189.0,252.0 L205.0,263.4 L224.0,265.0 L240.0,261.8 L256.4,257.0 L272.4,253.8 L300.0,252.2 L334.0,251.6 L382.0,250.0 L398.0,248.4 L436.6,245.0 L478.0,245.8 L510.0,246.5 L526.0,248.0 L540.0,250.0 L543.0,258.0 L545.0,263.5 L568.0,263.5 L568.0,291.9 L0.0,291.9Z" fill="#e4e5e9" stroke="#8fcf8a" stroke-width="0.8"/>
<rect width="568.0" height="7.5" fill="#000"/>
<rect y="276" width="568.0" height="8" fill="#000"/>
<path d="M47.5,0 V284.0 M95.5,0 V284.0 M142.5,0 V284.0 M189.5,0 V284.0 M237.5,0 V284.0 M284.5,0 V284.0 M331.5,0 V284.0 M379.5,0 V284.0 M426.5,0 V284.0 M473.5,0 V284.0 M521.5,0 V284.0 M0,237.5 H568.0 M0,189.5 H568.0 M0,142.5 H568.0 M0,95.5 H568.0 M0,47.5 H568.0" stroke="#d8d8d8" stroke-width="1" stroke-dasharray="1.4 3.85" stroke-dashoffset="-0.9" fill="none" opacity="0.85"/>
<path d="M478.5,142.0 L479.0,141.4 L479.5,140.9 L480.0,140.3 L480.5,139.8 L481.0,139.2 L481.5,138.7 L482.0,138.1 L482.5,137.5 L483.0,137.0 L483.6,136.4 L484.1,135.9 L484.6,135.3 L485.1,134.8 L485.6,134.2 L486.1,133.6 L486.6,133.1 L487.1,132.5 L487.7,132.0 L488.2,131.4 L488.7,130.9 L489.2,130.3 L489.7,129.8 L490.2,129.2 L490.8,128.7 L491.3,128.1 L491.8,127.6 L492.3,127.0 L492.9,126.5 L493.4,125.9 L493.9,125.4 L494.4,124.8 L495.0,124.3 L495.5,123.7 L496.0,123.2 L496.6,122.6 L497.1,122.1 L497.6,121.5 L498.2,121.0 L498.7,120.5 L499.3,119.9 L499.8,119.4 L500.4,118.8 L500.9,118.3 L501.4,117.8 L502.0,117.2 L502.6,116.7 L503.1,116.2 L503.7,115.6 L504.2,115.1 L504.8,114.6 L505.4,114.0 L505.9,113.5 L506.5,113.0 L507.1,112.5 L507.6,111.9 L508.2,111.4 L508.8,110.9 L509.4,110.4 L510.0,109.8 L510.5,109.3 L511.1,108.8 L511.7,108.3 L512.3,107.8 L512.9,107.3 L513.5,106.8 L514.1,106.3 L514.7,105.8 L515.3,105.3 L516.0,104.7 L516.6,104.2 L517.2,103.7 L517.8,103.3 L518.4,102.8 L519.1,102.3 L519.7,101.8 L520.3,101.3 L521.0,100.8 L521.6,100.3 L522.3,99.8 L522.9,99.3 L523.6,98.9 L524.2,98.4 L524.9,97.9 L525.6,97.4 L526.2,97.0 L526.9,96.5 L527.6,96.0 L528.3,95.6 L529.0,95.1 L529.7,94.7 L530.4,94.2 L531.1,93.8 L531.8,93.3 L532.5,92.9 L533.2,92.4 L533.9,92.0 L534.6,91.5 L535.4,91.1 L536.1,90.7 L536.8,90.3 L537.6,89.8 L538.3,89.4 L539.1,89.0 L539.8,88.6 L540.6,88.2 L541.4,87.8 L542.1,87.3 L542.9,86.9 L543.7,86.5 L544.5,86.2 L545.3,85.8 L546.1,85.4 L546.9,85.0 L547.7,84.6 L548.5,84.2 L549.3,83.9 L550.1,83.5 L551.0,83.1 L551.8,82.8 L552.6,82.4 L553.5,82.1 L554.3,81.7 L555.2,81.4 L556.1,81.0 L556.9,80.7 L557.8,80.4 L558.7,80.1 L559.6,79.7 L560.5,79.4 L561.3,79.1 L562.2,78.8 L563.2,78.5 L564.1,78.2 L565.0,77.9 L565.9,77.6 L566.8,77.4 L567.8,77.1 M0.7,76.8 L1.6,76.6 L2.6,76.3 L3.5,76.0 L4.5,75.8 L5.5,75.6 L6.4,75.3 L7.4,75.1 L8.4,74.9 L9.4,74.7 L10.3,74.4 L11.3,74.2 L12.3,74.0 L13.3,73.8 L14.3,73.6 L15.3,73.5 L16.3,73.3 L17.4,73.1 L18.4,73.0 L19.4,72.8 L20.4,72.6 L21.4,72.5 L22.5,72.4 L23.5,72.2 L24.6,72.1 L25.6,72.0 L26.6,71.9 L27.7,71.8 L28.7,71.7 L29.8,71.6 L30.8,71.5 L31.9,71.4 L33.0,71.3 L34.0,71.3 L35.1,71.2 L36.1,71.2 L37.2,71.1 L38.3,71.1 L39.3,71.1 L40.4,71.0 L41.5,71.0 L42.5,71.0 L43.6,71.0 L44.7,71.0 L45.7,71.0 L46.8,71.0 L47.8,71.1 L48.9,71.1 L50.0,71.1 L51.0,71.2 L52.1,71.2 L53.2,71.3 L54.2,71.3 L55.3,71.4 L56.3,71.5 L57.4,71.6 L58.4,71.7 L59.5,71.8 L60.5,71.9 L61.6,72.0 L62.6,72.1 L63.7,72.2 L64.7,72.4 L65.7,72.5 L66.8,72.6 L67.8,72.8 L68.8,73.0 L69.8,73.1 L70.8,73.3 L71.8,73.5 L72.9,73.6 L73.9,73.8 L74.9,74.0 L75.8,74.2 L76.8,74.4 L77.8,74.7 L78.8,74.9 L79.8,75.1 L80.7,75.3 L81.7,75.6 L82.7,75.8 L83.6,76.0 L84.6,76.3 L85.5,76.6 L86.5,76.8 L87.4,77.1 L88.3,77.4 L89.3,77.6 L90.2,77.9 L91.1,78.2 L92.0,78.5 L92.9,78.8 L93.8,79.1 L94.7,79.4 L95.6,79.7 L96.5,80.1 L97.4,80.4 L98.2,80.7 L99.1,81.0 L100.0,81.4 L100.8,81.7 L101.7,82.1 L102.5,82.4 L103.4,82.8 L104.2,83.1 L105.0,83.5 L105.9,83.9 L106.7,84.2 L107.5,84.6 L108.3,85.0 L109.1,85.4 L109.9,85.8 L110.7,86.2 L111.5,86.5 L112.3,86.9 L113.0,87.3 L113.8,87.8 L114.6,88.2 L115.3,88.6 L116.1,89.0 L116.9,89.4 L117.6,89.8 L118.3,90.3 L119.1,90.7 L119.8,91.1 L120.5,91.5 L121.3,92.0 L122.0,92.4 L122.7,92.9 L123.4,93.3 L124.1,93.8 L124.8,94.2 L125.5,94.7 L126.2,95.1 L126.9,95.6 L127.6,96.0 L128.3,96.5 L128.9,97.0 L129.6,97.4 L130.3,97.9 L130.9,98.4 L131.6,98.9 L132.2,99.3 L132.9,99.8 L133.5,100.3 L134.2,100.8 L134.8,101.3 L135.5,101.8 L136.1,102.3 L136.7,102.8 L137.4,103.3 L138.0,103.7 L138.6,104.2 L139.2,104.7 L139.8,105.3 L140.4,105.8 L141.1,106.3 L141.7,106.8 L142.3,107.3 L142.9,107.8 L143.4,108.3 L144.0,108.8 L144.6,109.3 L145.2,109.8 L145.8,110.4 L146.4,110.9 L147.0,111.4 L147.5,111.9 L148.1,112.5 L148.7,113.0 L149.3,113.5 L149.8,114.0 L150.4,114.6 L150.9,115.1 L151.5,115.6 L152.1,116.2 L152.6,116.7 L153.2,117.2 L153.7,117.8 L154.3,118.3 L154.8,118.8 L155.4,119.4 L155.9,119.9 L156.5,120.5 L157.0,121.0 L157.5,121.5 L158.1,122.1 L158.6,122.6 L159.1,123.2 L159.7,123.7 L160.2,124.3 L160.7,124.8 L161.3,125.4 L161.8,125.9 L162.3,126.5 L162.8,127.0 L163.4,127.6 L163.9,128.1 L164.4,128.7 L164.9,129.2 L165.4,129.8 L166.0,130.3 L166.5,130.9 L167.0,131.4 L167.5,132.0 L168.0,132.5 L168.5,133.1 L169.1,133.6 L169.6,134.2 L170.1,134.8 L170.6,135.3 L171.1,135.9 L171.6,136.4 L172.1,137.0 L172.6,137.5 L173.1,138.1 L173.7,138.7 L174.2,139.2 L174.7,139.8 L175.2,140.3 L175.7,140.9 L176.2,141.4 L176.7,142.0 L177.2,142.6 L177.7,143.1 L178.2,143.7 L178.7,144.2 L179.3,144.8 L179.8,145.3 L180.3,145.9 L180.8,146.5 L181.3,147.0 L181.8,147.6 L182.3,148.1 L182.8,148.7 L183.3,149.2 L183.8,149.8 L184.4,150.4 L184.9,150.9 L185.4,151.5 L185.9,152.0 L186.4,152.6 L186.9,153.1 L187.5,153.7 L188.0,154.2 L188.5,154.8 L189.0,155.3 L189.5,155.9 L190.1,156.4 L190.6,157.0 L191.1,157.5 L191.6,158.1 L192.2,158.6 L192.7,159.2 L193.2,159.7 L193.7,160.3 L194.3,160.8 L194.8,161.4 L195.4,161.9 L195.9,162.5 L196.4,163.0 L197.0,163.5 L197.5,164.1 L198.1,164.6 L198.6,165.2 L199.1,165.7 L199.7,166.2 L200.2,166.8 L200.8,167.3 L201.4,167.8 L201.9,168.4 L202.5,168.9 L203.0,169.4 L203.6,170.0 L204.2,170.5 L204.7,171.0 L205.3,171.5 L205.9,172.1 L206.5,172.6 L207.0,173.1 L207.6,173.6 L208.2,174.2 L208.8,174.7 L209.4,175.2 L210.0,175.7 L210.6,176.2 L211.2,176.7 L211.8,177.2 L212.4,177.7 L213.0,178.2 L213.6,178.7 L214.2,179.3 L214.8,179.8 L215.4,180.3 L216.1,180.7 L216.7,181.2 L217.3,181.7 L218.0,182.2 L218.6,182.7 L219.2,183.2 L219.9,183.7 L220.5,184.2 L221.2,184.7 L221.8,185.1 L222.5,185.6 L223.2,186.1 L223.8,186.6 L224.5,187.0 L225.2,187.5 L225.8,188.0 L226.5,188.4 L227.2,188.9 L227.9,189.3 L228.6,189.8 L229.3,190.2 L230.0,190.7 L230.7,191.1 L231.4,191.6 L232.2,192.0 L232.9,192.5 L233.6,192.9 L234.3,193.3 L235.1,193.7 L235.8,194.2 L236.6,194.6 L237.3,195.0 L238.1,195.4 L238.8,195.8 L239.6,196.2 L240.4,196.7 L241.2,197.1 L241.9,197.5 L242.7,197.8 L243.5,198.2 L244.3,198.6 L245.1,199.0 L245.9,199.4 L246.7,199.8 L247.6,200.1 L248.4,200.5 L249.2,200.9 L250.1,201.2 L250.9,201.6 L251.7,201.9 L252.6,202.3 L253.4,202.6 L254.3,203.0 L255.2,203.3 L256.1,203.6 L256.9,203.9 L257.8,204.3 L258.7,204.6 L259.6,204.9 L260.5,205.2 L261.4,205.5 L262.3,205.8 L263.2,206.1 L264.2,206.4 L265.1,206.6 L266.0,206.9 L266.9,207.2 L267.9,207.4 L268.8,207.7 L269.8,208.0 L270.7,208.2 L271.7,208.4 L272.7,208.7 L273.6,208.9 L274.6,209.1 L275.6,209.3 L276.6,209.6 L277.6,209.8 L278.6,210.0 L279.6,210.2 L280.6,210.4 L281.6,210.5 L282.6,210.7 L283.6,210.9 L284.6,211.0 L285.6,211.2 L286.7,211.4 L287.7,211.5 L288.7,211.6 L289.8,211.8 L290.8,211.9 L291.8,212.0 L292.9,212.1 L293.9,212.2 L295.0,212.3 L296.0,212.4 L297.1,212.5 L298.1,212.6 L299.2,212.7 L300.3,212.7 L301.3,212.8 L302.4,212.8 L303.4,212.9 L304.5,212.9 L305.6,212.9 L306.6,213.0 L307.7,213.0 L308.8,213.0 L309.8,213.0 L310.9,213.0 L312.0,213.0 L313.0,213.0 L314.1,212.9 L315.2,212.9 L316.2,212.9 L317.3,212.8 L318.4,212.8 L319.4,212.7 L320.5,212.7 L321.5,212.6 L322.6,212.5 L323.6,212.4 L324.7,212.3 L325.7,212.2 L326.8,212.1 L327.8,212.0 L328.9,211.9 L329.9,211.8 L330.9,211.6 L332.0,211.5 L333.0,211.4 L334.0,211.2 L335.1,211.0 L336.1,210.9 L337.1,210.7 L338.1,210.5 L339.1,210.4 L340.1,210.2 L341.1,210.0 L342.1,209.8 L343.1,209.6 L344.1,209.3 L345.1,209.1 L346.0,208.9 L347.0,208.7 L348.0,208.4 L348.9,208.2 L349.9,208.0 L350.8,207.7 L351.8,207.4 L352.7,207.2 L353.7,206.9 L354.6,206.6 L355.5,206.4 L356.4,206.1 L357.4,205.8 L358.3,205.5 L359.2,205.2 L360.1,204.9 L361.0,204.6 L361.9,204.3 L362.7,203.9 L363.6,203.6 L364.5,203.3 L365.4,203.0 L366.2,202.6 L367.1,202.3 L367.9,201.9 L368.8,201.6 L369.6,201.2 L370.5,200.9 L371.3,200.5 L372.1,200.1 L372.9,199.8 L373.7,199.4 L374.5,199.0 L375.4,198.6 L376.1,198.2 L376.9,197.8 L377.7,197.5 L378.5,197.1 L379.3,196.7 L380.1,196.2 L380.8,195.8 L381.6,195.4 L382.3,195.0 L383.1,194.6 L383.8,194.2 L384.6,193.7 L385.3,193.3 L386.1,192.9 L386.8,192.5 L387.5,192.0 L388.2,191.6 L388.9,191.1 L389.7,190.7 L390.4,190.2 L391.1,189.8 L391.8,189.3 L392.5,188.9 L393.1,188.4 L393.8,188.0 L394.5,187.5 L395.2,187.0 L395.8,186.6 L396.5,186.1 L397.2,185.6 L397.8,185.1 L398.5,184.7 L399.1,184.2 L399.8,183.7 L400.4,183.2 L401.1,182.7 L401.7,182.2 L402.4,181.7 L403.0,181.2 L403.6,180.7 L404.2,180.3 L404.9,179.8 L405.5,179.3 L406.1,178.7 L406.7,178.2 L407.3,177.7 L407.9,177.2 L408.5,176.7 L409.1,176.2 L409.7,175.7 L410.3,175.2 L410.9,174.7 L411.5,174.2 L412.1,173.6 L412.6,173.1 L413.2,172.6 L413.8,172.1 L414.4,171.5 L414.9,171.0 L415.5,170.5 L416.1,170.0 L416.6,169.4 L417.2,168.9 L417.8,168.4 L418.3,167.8 L418.9,167.3 L419.4,166.8 L420.0,166.2 L420.5,165.7 L421.1,165.2 L421.6,164.6 L422.2,164.1 L422.7,163.5 L423.2,163.0 L423.8,162.5 L424.3,161.9 L424.9,161.4 L425.4,160.8 L425.9,160.3 L426.5,159.7 L427.0,159.2 L427.5,158.6 L428.0,158.1 L428.6,157.5 L429.1,157.0 L429.6,156.4 L430.1,155.9 L430.7,155.3 L431.2,154.8 L431.7,154.2 L432.2,153.7 L432.7,153.1 L433.3,152.6 L433.8,152.0 L434.3,151.5 L434.8,150.9 L435.3,150.4 L435.8,149.8 L436.3,149.2 L436.8,148.7 L437.4,148.1 L437.9,147.6 L438.4,147.0 L438.9,146.5 L439.4,145.9 L439.9,145.3 L440.4,144.8 L440.9,144.2 L441.4,143.7 L441.9,143.1 L442.5,142.6 L443.0,142.0 L443.5,141.4" stroke="#f0e400" stroke-width="1.1" fill="none"/>
<g font-family="Liberation Serif" font-weight="bold" font-size="14.5" fill="#b8b8b8" stroke="#050505" stroke-width="1.8" letter-spacing="0.5" style="will-change:transform" paint-order="stroke">
<text x="2" y="43.1">60</text>
<text x="2" y="90.5">30</text>
<text x="2" y="137.8">0</text>
<text x="2" y="185.1">-30</text>
<text x="2" y="232.5">-60</text>
<text x="48.8" y="278.3">-150</text>
<text x="96.2" y="278.3">-120</text>
<text x="143.5" y="278.3">-90</text>
<text x="190.8" y="278.3">-60</text>
<text x="238.2" y="278.3">-30</text>
<text x="285.5" y="278.3">0</text>
<text x="332.8" y="278.3">30</text>
<text x="380.2" y="278.3">60</text>
<text x="427.5" y="278.3">90</text>
<text x="474.8" y="278.3">120</text>
<text x="522.2" y="278.3">150</text>
</g>
<defs><filter id="bb" x="-30%" y="-30%" width="160%" height="160%"><feGaussianBlur stdDeviation="1.6"/></filter></defs>
<g id="bingp" fill="none" stroke-linecap="butt">
<g stroke="#8c8c90" stroke-width="5" filter="url(#bb)" opacity="0.7">
<path d="M482.5,249 V264.5"/><ellipse cx="490.5" cy="259" rx="7.3" ry="5.3"/><path d="M503,254 V264.5"/><path d="M508.5,264.5 V254 M508.5,259 c0,-6 14,-6 14,0 V264.5"/><ellipse cx="532.8" cy="256.8" rx="6.3" ry="5"/><path d="M540,252 V265 c0,4.5 -3.5,5.5 -7.5,5.5 c-3,0 -5,-1 -6,-2"/>
</g>
<g stroke="#fff" stroke-width="2.9">
<path d="M482.5,249 V264.5"/><ellipse cx="490.5" cy="259" rx="7.3" ry="5.3"/><path d="M503,254 V264.5"/><path d="M508.5,264.5 V254 M508.5,259 c0,-6 14,-6 14,0 V264.5"/><ellipse cx="532.8" cy="256.8" rx="6.3" ry="5"/><path d="M540,252 V265 c0,4.5 -3.5,5.5 -7.5,5.5 c-3,0 -5,-1 -6,-2"/>
</g>
<circle cx="503" cy="250" r="2" fill="#f7a020"/>
<path d="M546,252 h3 M547.5,252 v3 M550,255 v-3 l1.2,2 l1.2,-2 v3" stroke="#fff" stroke-width="0.6"/>
</g>

<g transform="translate(480.5,141.5) rotate(-42)">
<rect x="-9" y="-3.6" width="18" height="7.2" rx="1.2" fill="#fff" stroke="#111" stroke-width="0.6"/>
<rect x="-3" y="-6" width="6" height="12" rx="1.2" fill="#fff" stroke="#111" stroke-width="0.6"/>
<rect x="-7.8" y="-2.4" width="5" height="4.8" fill="#3a5fd8"/>
<rect x="2.8" y="-2.4" width="5" height="4.8" fill="#3a5fd8"/>
<rect x="-1.8" y="-4.8" width="3.6" height="9.6" fill="#e8a010"/>
<rect x="-0.6" y="-4.8" width="1.2" height="9.6" fill="#704000" opacity="0.5"/>
</g>
</svg>

<!-- buttons -->
<div class="btn" style="left:594px;top:465px;width:73px;height:21px;border:2px solid #3b9fe0;box-shadow:inset 0 0 0 1px #9fe6fb;padding-top:3px">OK</div>
<div class="btn" style="left:672px;top:465px;width:73px;height:21px;padding-top:4px">Apply</div>
<div class="btn" style="left:750px;top:465px;width:73px;height:21px;padding-top:4px">Cancel</div>
<div class="btn" style="left:829px;top:465px;width:73px;height:21px;padding-top:4px">Help</div>

<svg width="936" height="519" style="position:absolute;left:0;top:0">
<defs>
<filter id="blur" x="-10%" y="-10%" width="120%" height="120%"><feGaussianBlur stdDeviation="3"/></filter>
<clipPath id="outclip"><path clip-rule="evenodd" d="M-10,-10 H946 V529 H-10 Z M0,-5 897.4,-5.0 L897.4,0.1 L898.3,2.7 L899.6,4.0 L898.8,8.3 L900.0,9.4 L901.0,12.4 L899.8,14.9 L898.5,16.7 L897.7,20.9 L896.6,23.1 L896.0,24.0 L898.5,26.9 L899.7,27.2 L903.3,29.9 L903.2,33.4 L903.5,36.0 L903.0,38.2 L903.5,41.0 L903.9,41.5 L901.4,44.3 L902.8,47.3 L901.3,49.5 L899.2,52.2 L897.0,55.2 L899.7,57.6 L902.0,59.4 L904.5,61.2 L903.6,61.7 L903.7,66.1 L903.4,67.7 L902.5,69.3 L901.3,72.7 L898.5,74.0 L898.3,78.7 L895.0,80.7 L897.3,81.2 L898.5,84.6 L901.5,84.9 L902.4,86.9 L904.1,89.6 L905.7,93.7 L906.0,96.2 L903.7,96.5 L902.6,98.9 L901.8,102.3 L903.0,104.2 L901.8,108.4 L902.6,111.1 L904.7,112.2 L904.4,115.0 L905.6,117.7 L906.1,120.3 L907.7,122.5 L907.1,125.5 L907.3,127.0 L909.7,130.1 L906.0,130.5 L903.1,133.5 L899.4,135.3 L902.3,136.4 L903.6,139.9 L905.1,142.1 L906.5,145.6 L905.2,146.4 L907.1,151.1 L906.5,152.4 L907.6,154.6 L904.6,155.7 L902.1,157.6 L899.4,158.2 L898.0,158.5 L895.0,161.4 L891.8,161.3 L895.2,162.9 L895.9,164.8 L899.3,165.5 L900.6,167.6 L903.1,170.2 L904.5,171.9 L904.6,175.4 L905.3,177.4 L903.0,179.1 L903.1,181.8 L903.1,185.8 L903.2,186.5 L906.2,189.3 L907.7,190.6 L907.6,192.5 L910.7,194.5 L908.8,197.3 L908.1,199.8 L908.5,201.7 L905.5,206.1 L906.7,208.7 L904.8,211.1 L904.5,211.3 L902.6,214.8 L900.9,216.0 L898.5,217.6 L896.8,219.0 L896.2,221.5 L898.8,222.6 L901.2,225.8 L903.3,228.0 L905.4,228.9 L905.3,230.9 L907.8,231.5 L908.3,234.7 L907.0,238.3 L906.7,239.4 L905.1,243.3 L904.9,245.7 L905.9,246.8 L907.6,250.8 L908.0,253.2 L911.0,255.7 L908.0,254.7 L904.8,257.5 L900.7,257.0 L898.5,258.4 L896.1,259.1 L894.3,258.8 L894.3,261.1 L896.2,263.0 L900.0,266.9 L899.6,268.0 L902.0,269.6 L904.1,272.0 L906.7,273.0 L907.9,274.6 L905.2,276.1 L904.1,276.7 L900.1,277.2 L898.3,279.3 L896.8,279.7 L894.3,281.3 L890.9,281.7 L888.6,283.5 L890.7,284.9 L893.0,285.2 L895.5,287.7 L896.6,288.4 L899.7,290.9 L899.2,292.1 L897.3,295.5 L894.0,297.1 L891.9,300.4 L891.4,302.9 L894.2,304.0 L896.6,305.4 L897.6,307.0 L899.9,307.5 L904.3,308.9 L903.4,311.4 L906.0,314.0 L904.7,318.0 L905.7,320.4 L907.8,322.8 L906.1,323.8 L903.4,324.0 L901.0,326.7 L898.5,327.3 L896.3,330.9 L892.3,331.0 L891.2,333.8 L892.8,333.4 L895.1,335.5 L898.7,336.1 L900.2,337.3 L902.5,338.4 L904.2,339.8 L908.8,340.7 L910.6,341.2 L908.6,344.8 L906.6,346.4 L904.3,348.8 L903.4,349.8 L899.5,353.4 L899.6,355.0 L899.1,358.0 L899.1,359.4 L899.8,362.7 L900.7,364.4 L902.2,368.6 L901.9,370.5 L901.1,373.3 L900.5,374.4 L898.5,376.4 L898.1,379.7 L896.3,382.2 L895.6,385.7 L893.9,389.7 L893.6,392.2 L895.2,395.5 L897.7,397.5 L898.6,400.5 L900.3,402.3 L900.8,406.1 L901.0,406.9 L901.3,410.5 L903.2,413.6 L904.4,414.4 L904.3,416.9 L905.8,420.5 L908.9,423.5 L908.9,425.9 L910.5,427.3 L912.9,429.0 L911.1,433.3 L911.3,434.7 L911.7,437.9 L910.0,439.6 L910.7,442.5 L909.9,445.2 L911.4,447.2 L910.1,449.1 L908.2,452.9 L906.6,455.9 L907.2,456.5 L906.1,459.7 L904.0,462.7 L901.2,464.6 L900.4,467.0 L896.7,468.6 L895.6,470.1 L891.1,469.7 L890.7,473.0 L891.0,476.6 L890.4,478.2 L890.4,482.1 L889.0,485.5 L889.9,486.4 L890.3,489.2 L888.0,488.2 L887.8,485.4 L885.4,483.0 L881.9,480.2 L877.9,480.9 L876.1,479.8 L872.6,479.6 L867.9,479.8 L868.1,476.2 L865.9,473.9 L862.2,471.9 L858.4,472.2 L856.1,473.2 L852.9,473.4 L849.5,472.1 L846.7,471.9 L845.5,473.9 L841.1,473.2 L838.8,475.1 L837.2,477.0 L834.1,477.6 L832.8,481.1 L832.2,485.5 L828.8,482.6 L827.0,482.1 L823.9,484.1 L821.1,482.9 L817.3,483.5 L814.6,484.6 L811.8,483.1 L809.4,483.6 L805.9,484.3 L801.6,484.5 L800.6,483.7 L797.6,483.5 L794.2,483.6 L791.2,483.4 L790.1,483.1 L787.3,484.2 L785.5,482.1 L782.6,483.1 L778.2,482.2 L776.0,481.3 L774.2,483.0 L771.0,482.6 L769.3,480.6 L767.1,481.5 L764.6,481.5 L761.6,480.3 L759.1,482.7 L756.5,482.5 L753.6,483.7 L749.8,484.3 L747.4,486.3 L744.7,487.1 L743.0,487.3 L739.5,487.7 L736.3,487.3 L734.4,487.3 L730.3,488.9 L728.8,488.0 L725.3,488.8 L723.1,488.5 L718.9,488.9 L718.0,489.1 L714.5,489.7 L711.2,489.8 L708.9,490.0 L705.3,490.0 L702.9,491.1 L699.9,490.2 L699.0,488.2 L697.8,484.5 L694.5,483.8 L691.0,483.5 L688.9,479.8 L686.8,480.2 L684.5,480.8 L680.5,480.3 L679.3,481.0 L676.7,481.6 L675.6,483.6 L672.6,485.9 L672.6,489.2 L670.0,490.3 L668.9,490.5 L666.8,486.3 L663.5,484.6 L661.3,483.9 L658.5,484.7 L658.0,483.0 L655.2,483.6 L651.9,484.7 L649.4,482.6 L644.9,484.0 L644.5,484.4 L641.1,487.9 L638.7,488.5 L637.3,490.8 L636.0,488.8 L632.9,489.4 L630.4,488.2 L627.9,487.0 L624.0,485.9 L622.0,485.5 L617.9,483.8 L617.1,486.5 L615.1,487.5 L612.7,488.6 L610.5,488.6 L607.2,490.8 L605.0,489.6 L601.3,491.7 L599.5,492.2 L597.4,491.1 L594.7,491.6 L590.6,490.6 L587.2,490.5 L586.6,489.7 L582.9,489.6 L579.0,490.8 L577.2,487.7 L574.8,487.4 L573.6,484.3 L570.6,484.9 L568.3,482.3 L566.6,481.1 L564.9,479.5 L562.1,479.3 L558.7,480.4 L557.7,481.7 L553.2,485.1 L551.0,486.2 L548.2,486.4 L546.6,485.4 L545.6,483.0 L544.1,481.6 L541.2,479.1 L539.5,476.0 L538.5,475.2 L535.9,474.5 L532.7,475.4 L530.5,474.7 L527.1,475.9 L523.8,476.2 L522.9,476.1 L520.1,476.8 L516.5,476.4 L515.8,476.6 L511.9,476.1 L508.8,476.4 L507.9,477.8 L505.2,478.5 L502.0,478.4 L499.3,477.3 L497.7,478.5 L495.1,477.6 L492.2,477.5 L491.1,480.8 L487.7,482.9 L485.8,483.0 L485.5,485.5 L483.3,488.5 L480.5,490.8 L479.5,492.1 L477.4,491.1 L476.2,488.3 L472.4,486.5 L471.0,484.3 L468.2,484.1 L467.3,482.9 L465.8,480.9 L461.7,479.5 L459.0,480.5 L457.0,481.0 L454.0,482.0 L451.3,481.4 L450.1,482.5 L446.1,481.5 L444.8,481.2 L440.6,482.8 L439.0,481.7 L435.3,481.7 L434.5,482.1 L432.4,482.8 L429.9,480.8 L425.4,480.6 L423.4,481.2 L420.0,481.5 L417.5,480.8 L415.3,481.8 L413.2,480.4 L409.7,480.6 L409.5,483.4 L408.7,485.8 L405.5,486.3 L405.2,490.1 L403.0,492.3 L400.8,489.6 L397.6,487.6 L396.4,488.3 L394.8,485.9 L391.9,485.6 L389.4,484.6 L385.5,484.2 L382.1,483.2 L380.4,485.0 L377.9,485.3 L375.2,487.2 L374.1,488.9 L372.3,489.9 L368.6,492.6 L366.6,495.1 L365.4,497.0 L362.0,494.1 L359.0,494.6 L355.9,493.2 L353.5,494.0 L349.9,491.7 L348.4,489.6 L347.5,489.0 L344.8,485.5 L343.3,483.7 L339.9,483.6 L337.6,480.6 L337.0,480.5 L333.4,477.4 L331.0,477.9 L328.6,481.0 L325.9,480.3 L323.9,481.0 L322.4,483.7 L320.8,484.5 L318.5,484.1 L314.9,487.4 L312.1,486.9 L310.8,487.9 L308.6,486.0 L305.5,486.8 L303.0,485.3 L300.7,484.1 L299.6,481.9 L296.4,482.2 L296.0,484.3 L292.7,487.7 L292.4,487.6 L290.7,490.6 L287.4,491.4 L284.9,493.5 L282.0,491.4 L279.1,491.4 L277.1,493.3 L273.9,491.6 L273.4,493.5 L271.0,490.7 L267.1,491.5 L265.0,489.9 L262.2,487.3 L259.9,488.1 L258.5,486.7 L255.3,485.7 L252.9,484.7 L250.9,483.4 L247.5,484.7 L245.2,482.4 L242.6,483.5 L238.5,484.0 L236.4,485.3 L236.0,488.0 L233.6,489.1 L229.3,492.8 L229.4,490.7 L227.3,487.3 L225.7,483.9 L223.3,482.4 L219.0,480.2 L216.8,480.1 L214.4,479.7 L211.8,480.5 L210.7,481.4 L207.9,481.2 L203.7,481.7 L200.9,479.9 L198.7,481.6 L195.5,481.5 L192.5,482.8 L190.1,482.0 L187.5,483.4 L185.1,483.9 L181.0,484.4 L177.3,484.2 L176.4,485.4 L171.7,485.9 L170.0,486.1 L167.4,484.2 L165.2,485.7 L162.4,485.6 L160.5,484.3 L156.8,484.6 L154.2,484.2 L152.0,485.4 L149.1,483.6 L145.5,484.1 L143.6,483.6 L139.6,484.0 L138.3,481.4 L137.2,481.7 L135.4,479.4 L134.4,477.7 L132.8,474.9 L130.5,472.3 L129.1,475.0 L126.2,478.3 L123.8,478.8 L123.1,481.8 L119.4,482.6 L117.5,482.7 L116.1,483.4 L112.2,484.1 L110.3,484.5 L108.0,485.2 L105.0,484.1 L103.8,485.8 L99.1,485.4 L98.1,487.0 L94.0,484.8 L92.1,485.7 L90.3,486.6 L86.1,485.6 L83.9,486.6 L80.2,485.3 L77.2,485.8 L74.3,486.3 L72.8,485.3 L69.0,484.4 L67.2,485.8 L64.6,484.2 L62.9,485.0 L59.1,483.8 L55.8,485.5 L52.7,484.6 L51.2,484.2 L48.8,485.5 L46.3,485.1 L42.0,483.4 L39.9,484.0 L36.6,485.4 L33.9,485.3 L33.2,482.3 L30.7,481.8 L26.5,481.7 L23.7,483.0 L22.0,484.3 L20.7,482.9 L17.2,484.2 L12.9,484.5 L9.4,486.2 L7.1,484.7 L4.3,485.5 L2.7,484.9 L0.0,485.5 L-5,485.5 Z"/></clipPath>
</defs>
<path fill-rule="evenodd" fill="#fff" d="M-10,-10 H946 V529 H-10 Z M0,-5 897.4,-5.0 L897.4,0.1 L898.3,2.7 L899.6,4.0 L898.8,8.3 L900.0,9.4 L901.0,12.4 L899.8,14.9 L898.5,16.7 L897.7,20.9 L896.6,23.1 L896.0,24.0 L898.5,26.9 L899.7,27.2 L903.3,29.9 L903.2,33.4 L903.5,36.0 L903.0,38.2 L903.5,41.0 L903.9,41.5 L901.4,44.3 L902.8,47.3 L901.3,49.5 L899.2,52.2 L897.0,55.2 L899.7,57.6 L902.0,59.4 L904.5,61.2 L903.6,61.7 L903.7,66.1 L903.4,67.7 L902.5,69.3 L901.3,72.7 L898.5,74.0 L898.3,78.7 L895.0,80.7 L897.3,81.2 L898.5,84.6 L901.5,84.9 L902.4,86.9 L904.1,89.6 L905.7,93.7 L906.0,96.2 L903.7,96.5 L902.6,98.9 L901.8,102.3 L903.0,104.2 L901.8,108.4 L902.6,111.1 L904.7,112.2 L904.4,115.0 L905.6,117.7 L906.1,120.3 L907.7,122.5 L907.1,125.5 L907.3,127.0 L909.7,130.1 L906.0,130.5 L903.1,133.5 L899.4,135.3 L902.3,136.4 L903.6,139.9 L905.1,142.1 L906.5,145.6 L905.2,146.4 L907.1,151.1 L906.5,152.4 L907.6,154.6 L904.6,155.7 L902.1,157.6 L899.4,158.2 L898.0,158.5 L895.0,161.4 L891.8,161.3 L895.2,162.9 L895.9,164.8 L899.3,165.5 L900.6,167.6 L903.1,170.2 L904.5,171.9 L904.6,175.4 L905.3,177.4 L903.0,179.1 L903.1,181.8 L903.1,185.8 L903.2,186.5 L906.2,189.3 L907.7,190.6 L907.6,192.5 L910.7,194.5 L908.8,197.3 L908.1,199.8 L908.5,201.7 L905.5,206.1 L906.7,208.7 L904.8,211.1 L904.5,211.3 L902.6,214.8 L900.9,216.0 L898.5,217.6 L896.8,219.0 L896.2,221.5 L898.8,222.6 L901.2,225.8 L903.3,228.0 L905.4,228.9 L905.3,230.9 L907.8,231.5 L908.3,234.7 L907.0,238.3 L906.7,239.4 L905.1,243.3 L904.9,245.7 L905.9,246.8 L907.6,250.8 L908.0,253.2 L911.0,255.7 L908.0,254.7 L904.8,257.5 L900.7,257.0 L898.5,258.4 L896.1,259.1 L894.3,258.8 L894.3,261.1 L896.2,263.0 L900.0,266.9 L899.6,268.0 L902.0,269.6 L904.1,272.0 L906.7,273.0 L907.9,274.6 L905.2,276.1 L904.1,276.7 L900.1,277.2 L898.3,279.3 L896.8,279.7 L894.3,281.3 L890.9,281.7 L888.6,283.5 L890.7,284.9 L893.0,285.2 L895.5,287.7 L896.6,288.4 L899.7,290.9 L899.2,292.1 L897.3,295.5 L894.0,297.1 L891.9,300.4 L891.4,302.9 L894.2,304.0 L896.6,305.4 L897.6,307.0 L899.9,307.5 L904.3,308.9 L903.4,311.4 L906.0,314.0 L904.7,318.0 L905.7,320.4 L907.8,322.8 L906.1,323.8 L903.4,324.0 L901.0,326.7 L898.5,327.3 L896.3,330.9 L892.3,331.0 L891.2,333.8 L892.8,333.4 L895.1,335.5 L898.7,336.1 L900.2,337.3 L902.5,338.4 L904.2,339.8 L908.8,340.7 L910.6,341.2 L908.6,344.8 L906.6,346.4 L904.3,348.8 L903.4,349.8 L899.5,353.4 L899.6,355.0 L899.1,358.0 L899.1,359.4 L899.8,362.7 L900.7,364.4 L902.2,368.6 L901.9,370.5 L901.1,373.3 L900.5,374.4 L898.5,376.4 L898.1,379.7 L896.3,382.2 L895.6,385.7 L893.9,389.7 L893.6,392.2 L895.2,395.5 L897.7,397.5 L898.6,400.5 L900.3,402.3 L900.8,406.1 L901.0,406.9 L901.3,410.5 L903.2,413.6 L904.4,414.4 L904.3,416.9 L905.8,420.5 L908.9,423.5 L908.9,425.9 L910.5,427.3 L912.9,429.0 L911.1,433.3 L911.3,434.7 L911.7,437.9 L910.0,439.6 L910.7,442.5 L909.9,445.2 L911.4,447.2 L910.1,449.1 L908.2,452.9 L906.6,455.9 L907.2,456.5 L906.1,459.7 L904.0,462.7 L901.2,464.6 L900.4,467.0 L896.7,468.6 L895.6,470.1 L891.1,469.7 L890.7,473.0 L891.0,476.6 L890.4,478.2 L890.4,482.1 L889.0,485.5 L889.9,486.4 L890.3,489.2 L888.0,488.2 L887.8,485.4 L885.4,483.0 L881.9,480.2 L877.9,480.9 L876.1,479.8 L872.6,479.6 L867.9,479.8 L868.1,476.2 L865.9,473.9 L862.2,471.9 L858.4,472.2 L856.1,473.2 L852.9,473.4 L849.5,472.1 L846.7,471.9 L845.5,473.9 L841.1,473.2 L838.8,475.1 L837.2,477.0 L834.1,477.6 L832.8,481.1 L832.2,485.5 L828.8,482.6 L827.0,482.1 L823.9,484.1 L821.1,482.9 L817.3,483.5 L814.6,484.6 L811.8,483.1 L809.4,483.6 L805.9,484.3 L801.6,484.5 L800.6,483.7 L797.6,483.5 L794.2,483.6 L791.2,483.4 L790.1,483.1 L787.3,484.2 L785.5,482.1 L782.6,483.1 L778.2,482.2 L776.0,481.3 L774.2,483.0 L771.0,482.6 L769.3,480.6 L767.1,481.5 L764.6,481.5 L761.6,480.3 L759.1,482.7 L756.5,482.5 L753.6,483.7 L749.8,484.3 L747.4,486.3 L744.7,487.1 L743.0,487.3 L739.5,487.7 L736.3,487.3 L734.4,487.3 L730.3,488.9 L728.8,488.0 L725.3,488.8 L723.1,488.5 L718.9,488.9 L718.0,489.1 L714.5,489.7 L711.2,489.8 L708.9,490.0 L705.3,490.0 L702.9,491.1 L699.9,490.2 L699.0,488.2 L697.8,484.5 L694.5,483.8 L691.0,483.5 L688.9,479.8 L686.8,480.2 L684.5,480.8 L680.5,480.3 L679.3,481.0 L676.7,481.6 L675.6,483.6 L672.6,485.9 L672.6,489.2 L670.0,490.3 L668.9,490.5 L666.8,486.3 L663.5,484.6 L661.3,483.9 L658.5,484.7 L658.0,483.0 L655.2,483.6 L651.9,484.7 L649.4,482.6 L644.9,484.0 L644.5,484.4 L641.1,487.9 L638.7,488.5 L637.3,490.8 L636.0,488.8 L632.9,489.4 L630.4,488.2 L627.9,487.0 L624.0,485.9 L622.0,485.5 L617.9,483.8 L617.1,486.5 L615.1,487.5 L612.7,488.6 L610.5,488.6 L607.2,490.8 L605.0,489.6 L601.3,491.7 L599.5,492.2 L597.4,491.1 L594.7,491.6 L590.6,490.6 L587.2,490.5 L586.6,489.7 L582.9,489.6 L579.0,490.8 L577.2,487.7 L574.8,487.4 L573.6,484.3 L570.6,484.9 L568.3,482.3 L566.6,481.1 L564.9,479.5 L562.1,479.3 L558.7,480.4 L557.7,481.7 L553.2,485.1 L551.0,486.2 L548.2,486.4 L546.6,485.4 L545.6,483.0 L544.1,481.6 L541.2,479.1 L539.5,476.0 L538.5,475.2 L535.9,474.5 L532.7,475.4 L530.5,474.7 L527.1,475.9 L523.8,476.2 L522.9,476.1 L520.1,476.8 L516.5,476.4 L515.8,476.6 L511.9,476.1 L508.8,476.4 L507.9,477.8 L505.2,478.5 L502.0,478.4 L499.3,477.3 L497.7,478.5 L495.1,477.6 L492.2,477.5 L491.1,480.8 L487.7,482.9 L485.8,483.0 L485.5,485.5 L483.3,488.5 L480.5,490.8 L479.5,492.1 L477.4,491.1 L476.2,488.3 L472.4,486.5 L471.0,484.3 L468.2,484.1 L467.3,482.9 L465.8,480.9 L461.7,479.5 L459.0,480.5 L457.0,481.0 L454.0,482.0 L451.3,481.4 L450.1,482.5 L446.1,481.5 L444.8,481.2 L440.6,482.8 L439.0,481.7 L435.3,481.7 L434.5,482.1 L432.4,482.8 L429.9,480.8 L425.4,480.6 L423.4,481.2 L420.0,481.5 L417.5,480.8 L415.3,481.8 L413.2,480.4 L409.7,480.6 L409.5,483.4 L408.7,485.8 L405.5,486.3 L405.2,490.1 L403.0,492.3 L400.8,489.6 L397.6,487.6 L396.4,488.3 L394.8,485.9 L391.9,485.6 L389.4,484.6 L385.5,484.2 L382.1,483.2 L380.4,485.0 L377.9,485.3 L375.2,487.2 L374.1,488.9 L372.3,489.9 L368.6,492.6 L366.6,495.1 L365.4,497.0 L362.0,494.1 L359.0,494.6 L355.9,493.2 L353.5,494.0 L349.9,491.7 L348.4,489.6 L347.5,489.0 L344.8,485.5 L343.3,483.7 L339.9,483.6 L337.6,480.6 L337.0,480.5 L333.4,477.4 L331.0,477.9 L328.6,481.0 L325.9,480.3 L323.9,481.0 L322.4,483.7 L320.8,484.5 L318.5,484.1 L314.9,487.4 L312.1,486.9 L310.8,487.9 L308.6,486.0 L305.5,486.8 L303.0,485.3 L300.7,484.1 L299.6,481.9 L296.4,482.2 L296.0,484.3 L292.7,487.7 L292.4,487.6 L290.7,490.6 L287.4,491.4 L284.9,493.5 L282.0,491.4 L279.1,491.4 L277.1,493.3 L273.9,491.6 L273.4,493.5 L271.0,490.7 L267.1,491.5 L265.0,489.9 L262.2,487.3 L259.9,488.1 L258.5,486.7 L255.3,485.7 L252.9,484.7 L250.9,483.4 L247.5,484.7 L245.2,482.4 L242.6,483.5 L238.5,484.0 L236.4,485.3 L236.0,488.0 L233.6,489.1 L229.3,492.8 L229.4,490.7 L227.3,487.3 L225.7,483.9 L223.3,482.4 L219.0,480.2 L216.8,480.1 L214.4,479.7 L211.8,480.5 L210.7,481.4 L207.9,481.2 L203.7,481.7 L200.9,479.9 L198.7,481.6 L195.5,481.5 L192.5,482.8 L190.1,482.0 L187.5,483.4 L185.1,483.9 L181.0,484.4 L177.3,484.2 L176.4,485.4 L171.7,485.9 L170.0,486.1 L167.4,484.2 L165.2,485.7 L162.4,485.6 L160.5,484.3 L156.8,484.6 L154.2,484.2 L152.0,485.4 L149.1,483.6 L145.5,484.1 L143.6,483.6 L139.6,484.0 L138.3,481.4 L137.2,481.7 L135.4,479.4 L134.4,477.7 L132.8,474.9 L130.5,472.3 L129.1,475.0 L126.2,478.3 L123.8,478.8 L123.1,481.8 L119.4,482.6 L117.5,482.7 L116.1,483.4 L112.2,484.1 L110.3,484.5 L108.0,485.2 L105.0,484.1 L103.8,485.8 L99.1,485.4 L98.1,487.0 L94.0,484.8 L92.1,485.7 L90.3,486.6 L86.1,485.6 L83.9,486.6 L80.2,485.3 L77.2,485.8 L74.3,486.3 L72.8,485.3 L69.0,484.4 L67.2,485.8 L64.6,484.2 L62.9,485.0 L59.1,483.8 L55.8,485.5 L52.7,484.6 L51.2,484.2 L48.8,485.5 L46.3,485.1 L42.0,483.4 L39.9,484.0 L36.6,485.4 L33.9,485.3 L33.2,482.3 L30.7,481.8 L26.5,481.7 L23.7,483.0 L22.0,484.3 L20.7,482.9 L17.2,484.2 L12.9,484.5 L9.4,486.2 L7.1,484.7 L4.3,485.5 L2.7,484.9 L0.0,485.5 L-5,485.5 Z"/>
<g clip-path="url(#outclip)"><path d="M0,-5 897.4,-5.0 L897.4,0.1 L898.3,2.7 L899.6,4.0 L898.8,8.3 L900.0,9.4 L901.0,12.4 L899.8,14.9 L898.5,16.7 L897.7,20.9 L896.6,23.1 L896.0,24.0 L898.5,26.9 L899.7,27.2 L903.3,29.9 L903.2,33.4 L903.5,36.0 L903.0,38.2 L903.5,41.0 L903.9,41.5 L901.4,44.3 L902.8,47.3 L901.3,49.5 L899.2,52.2 L897.0,55.2 L899.7,57.6 L902.0,59.4 L904.5,61.2 L903.6,61.7 L903.7,66.1 L903.4,67.7 L902.5,69.3 L901.3,72.7 L898.5,74.0 L898.3,78.7 L895.0,80.7 L897.3,81.2 L898.5,84.6 L901.5,84.9 L902.4,86.9 L904.1,89.6 L905.7,93.7 L906.0,96.2 L903.7,96.5 L902.6,98.9 L901.8,102.3 L903.0,104.2 L901.8,108.4 L902.6,111.1 L904.7,112.2 L904.4,115.0 L905.6,117.7 L906.1,120.3 L907.7,122.5 L907.1,125.5 L907.3,127.0 L909.7,130.1 L906.0,130.5 L903.1,133.5 L899.4,135.3 L902.3,136.4 L903.6,139.9 L905.1,142.1 L906.5,145.6 L905.2,146.4 L907.1,151.1 L906.5,152.4 L907.6,154.6 L904.6,155.7 L902.1,157.6 L899.4,158.2 L898.0,158.5 L895.0,161.4 L891.8,161.3 L895.2,162.9 L895.9,164.8 L899.3,165.5 L900.6,167.6 L903.1,170.2 L904.5,171.9 L904.6,175.4 L905.3,177.4 L903.0,179.1 L903.1,181.8 L903.1,185.8 L903.2,186.5 L906.2,189.3 L907.7,190.6 L907.6,192.5 L910.7,194.5 L908.8,197.3 L908.1,199.8 L908.5,201.7 L905.5,206.1 L906.7,208.7 L904.8,211.1 L904.5,211.3 L902.6,214.8 L900.9,216.0 L898.5,217.6 L896.8,219.0 L896.2,221.5 L898.8,222.6 L901.2,225.8 L903.3,228.0 L905.4,228.9 L905.3,230.9 L907.8,231.5 L908.3,234.7 L907.0,238.3 L906.7,239.4 L905.1,243.3 L904.9,245.7 L905.9,246.8 L907.6,250.8 L908.0,253.2 L911.0,255.7 L908.0,254.7 L904.8,257.5 L900.7,257.0 L898.5,258.4 L896.1,259.1 L894.3,258.8 L894.3,261.1 L896.2,263.0 L900.0,266.9 L899.6,268.0 L902.0,269.6 L904.1,272.0 L906.7,273.0 L907.9,274.6 L905.2,276.1 L904.1,276.7 L900.1,277.2 L898.3,279.3 L896.8,279.7 L894.3,281.3 L890.9,281.7 L888.6,283.5 L890.7,284.9 L893.0,285.2 L895.5,287.7 L896.6,288.4 L899.7,290.9 L899.2,292.1 L897.3,295.5 L894.0,297.1 L891.9,300.4 L891.4,302.9 L894.2,304.0 L896.6,305.4 L897.6,307.0 L899.9,307.5 L904.3,308.9 L903.4,311.4 L906.0,314.0 L904.7,318.0 L905.7,320.4 L907.8,322.8 L906.1,323.8 L903.4,324.0 L901.0,326.7 L898.5,327.3 L896.3,330.9 L892.3,331.0 L891.2,333.8 L892.8,333.4 L895.1,335.5 L898.7,336.1 L900.2,337.3 L902.5,338.4 L904.2,339.8 L908.8,340.7 L910.6,341.2 L908.6,344.8 L906.6,346.4 L904.3,348.8 L903.4,349.8 L899.5,353.4 L899.6,355.0 L899.1,358.0 L899.1,359.4 L899.8,362.7 L900.7,364.4 L902.2,368.6 L901.9,370.5 L901.1,373.3 L900.5,374.4 L898.5,376.4 L898.1,379.7 L896.3,382.2 L895.6,385.7 L893.9,389.7 L893.6,392.2 L895.2,395.5 L897.7,397.5 L898.6,400.5 L900.3,402.3 L900.8,406.1 L901.0,406.9 L901.3,410.5 L903.2,413.6 L904.4,414.4 L904.3,416.9 L905.8,420.5 L908.9,423.5 L908.9,425.9 L910.5,427.3 L912.9,429.0 L911.1,433.3 L911.3,434.7 L911.7,437.9 L910.0,439.6 L910.7,442.5 L909.9,445.2 L911.4,447.2 L910.1,449.1 L908.2,452.9 L906.6,455.9 L907.2,456.5 L906.1,459.7 L904.0,462.7 L901.2,464.6 L900.4,467.0 L896.7,468.6 L895.6,470.1 L891.1,469.7 L890.7,473.0 L891.0,476.6 L890.4,478.2 L890.4,482.1 L889.0,485.5 L889.9,486.4 L890.3,489.2 L888.0,488.2 L887.8,485.4 L885.4,483.0 L881.9,480.2 L877.9,480.9 L876.1,479.8 L872.6,479.6 L867.9,479.8 L868.1,476.2 L865.9,473.9 L862.2,471.9 L858.4,472.2 L856.1,473.2 L852.9,473.4 L849.5,472.1 L846.7,471.9 L845.5,473.9 L841.1,473.2 L838.8,475.1 L837.2,477.0 L834.1,477.6 L832.8,481.1 L832.2,485.5 L828.8,482.6 L827.0,482.1 L823.9,484.1 L821.1,482.9 L817.3,483.5 L814.6,484.6 L811.8,483.1 L809.4,483.6 L805.9,484.3 L801.6,484.5 L800.6,483.7 L797.6,483.5 L794.2,483.6 L791.2,483.4 L790.1,483.1 L787.3,484.2 L785.5,482.1 L782.6,483.1 L778.2,482.2 L776.0,481.3 L774.2,483.0 L771.0,482.6 L769.3,480.6 L767.1,481.5 L764.6,481.5 L761.6,480.3 L759.1,482.7 L756.5,482.5 L753.6,483.7 L749.8,484.3 L747.4,486.3 L744.7,487.1 L743.0,487.3 L739.5,487.7 L736.3,487.3 L734.4,487.3 L730.3,488.9 L728.8,488.0 L725.3,488.8 L723.1,488.5 L718.9,488.9 L718.0,489.1 L714.5,489.7 L711.2,489.8 L708.9,490.0 L705.3,490.0 L702.9,491.1 L699.9,490.2 L699.0,488.2 L697.8,484.5 L694.5,483.8 L691.0,483.5 L688.9,479.8 L686.8,480.2 L684.5,480.8 L680.5,480.3 L679.3,481.0 L676.7,481.6 L675.6,483.6 L672.6,485.9 L672.6,489.2 L670.0,490.3 L668.9,490.5 L666.8,486.3 L663.5,484.6 L661.3,483.9 L658.5,484.7 L658.0,483.0 L655.2,483.6 L651.9,484.7 L649.4,482.6 L644.9,484.0 L644.5,484.4 L641.1,487.9 L638.7,488.5 L637.3,490.8 L636.0,488.8 L632.9,489.4 L630.4,488.2 L627.9,487.0 L624.0,485.9 L622.0,485.5 L617.9,483.8 L617.1,486.5 L615.1,487.5 L612.7,488.6 L610.5,488.6 L607.2,490.8 L605.0,489.6 L601.3,491.7 L599.5,492.2 L597.4,491.1 L594.7,491.6 L590.6,490.6 L587.2,490.5 L586.6,489.7 L582.9,489.6 L579.0,490.8 L577.2,487.7 L574.8,487.4 L573.6,484.3 L570.6,484.9 L568.3,482.3 L566.6,481.1 L564.9,479.5 L562.1,479.3 L558.7,480.4 L557.7,481.7 L553.2,485.1 L551.0,486.2 L548.2,486.4 L546.6,485.4 L545.6,483.0 L544.1,481.6 L541.2,479.1 L539.5,476.0 L538.5,475.2 L535.9,474.5 L532.7,475.4 L530.5,474.7 L527.1,475.9 L523.8,476.2 L522.9,476.1 L520.1,476.8 L516.5,476.4 L515.8,476.6 L511.9,476.1 L508.8,476.4 L507.9,477.8 L505.2,478.5 L502.0,478.4 L499.3,477.3 L497.7,478.5 L495.1,477.6 L492.2,477.5 L491.1,480.8 L487.7,482.9 L485.8,483.0 L485.5,485.5 L483.3,488.5 L480.5,490.8 L479.5,492.1 L477.4,491.1 L476.2,488.3 L472.4,486.5 L471.0,484.3 L468.2,484.1 L467.3,482.9 L465.8,480.9 L461.7,479.5 L459.0,480.5 L457.0,481.0 L454.0,482.0 L451.3,481.4 L450.1,482.5 L446.1,481.5 L444.8,481.2 L440.6,482.8 L439.0,481.7 L435.3,481.7 L434.5,482.1 L432.4,482.8 L429.9,480.8 L425.4,480.6 L423.4,481.2 L420.0,481.5 L417.5,480.8 L415.3,481.8 L413.2,480.4 L409.7,480.6 L409.5,483.4 L408.7,485.8 L405.5,486.3 L405.2,490.1 L403.0,492.3 L400.8,489.6 L397.6,487.6 L396.4,488.3 L394.8,485.9 L391.9,485.6 L389.4,484.6 L385.5,484.2 L382.1,483.2 L380.4,485.0 L377.9,485.3 L375.2,487.2 L374.1,488.9 L372.3,489.9 L368.6,492.6 L366.6,495.1 L365.4,497.0 L362.0,494.1 L359.0,494.6 L355.9,493.2 L353.5,494.0 L349.9,491.7 L348.4,489.6 L347.5,489.0 L344.8,485.5 L343.3,483.7 L339.9,483.6 L337.6,480.6 L337.0,480.5 L333.4,477.4 L331.0,477.9 L328.6,481.0 L325.9,480.3 L323.9,481.0 L322.4,483.7 L320.8,484.5 L318.5,484.1 L314.9,487.4 L312.1,486.9 L310.8,487.9 L308.6,486.0 L305.5,486.8 L303.0,485.3 L300.7,484.1 L299.6,481.9 L296.4,482.2 L296.0,484.3 L292.7,487.7 L292.4,487.6 L290.7,490.6 L287.4,491.4 L284.9,493.5 L282.0,491.4 L279.1,491.4 L277.1,493.3 L273.9,491.6 L273.4,493.5 L271.0,490.7 L267.1,491.5 L265.0,489.9 L262.2,487.3 L259.9,488.1 L258.5,486.7 L255.3,485.7 L252.9,484.7 L250.9,483.4 L247.5,484.7 L245.2,482.4 L242.6,483.5 L238.5,484.0 L236.4,485.3 L236.0,488.0 L233.6,489.1 L229.3,492.8 L229.4,490.7 L227.3,487.3 L225.7,483.9 L223.3,482.4 L219.0,480.2 L216.8,480.1 L214.4,479.7 L211.8,480.5 L210.7,481.4 L207.9,481.2 L203.7,481.7 L200.9,479.9 L198.7,481.6 L195.5,481.5 L192.5,482.8 L190.1,482.0 L187.5,483.4 L185.1,483.9 L181.0,484.4 L177.3,484.2 L176.4,485.4 L171.7,485.9 L170.0,486.1 L167.4,484.2 L165.2,485.7 L162.4,485.6 L160.5,484.3 L156.8,484.6 L154.2,484.2 L152.0,485.4 L149.1,483.6 L145.5,484.1 L143.6,483.6 L139.6,484.0 L138.3,481.4 L137.2,481.7 L135.4,479.4 L134.4,477.7 L132.8,474.9 L130.5,472.3 L129.1,475.0 L126.2,478.3 L123.8,478.8 L123.1,481.8 L119.4,482.6 L117.5,482.7 L116.1,483.4 L112.2,484.1 L110.3,484.5 L108.0,485.2 L105.0,484.1 L103.8,485.8 L99.1,485.4 L98.1,487.0 L94.0,484.8 L92.1,485.7 L90.3,486.6 L86.1,485.6 L83.9,486.6 L80.2,485.3 L77.2,485.8 L74.3,486.3 L72.8,485.3 L69.0,484.4 L67.2,485.8 L64.6,484.2 L62.9,485.0 L59.1,483.8 L55.8,485.5 L52.7,484.6 L51.2,484.2 L48.8,485.5 L46.3,485.1 L42.0,483.4 L39.9,484.0 L36.6,485.4 L33.9,485.3 L33.2,482.3 L30.7,481.8 L26.5,481.7 L23.7,483.0 L22.0,484.3 L20.7,482.9 L17.2,484.2 L12.9,484.5 L9.4,486.2 L7.1,484.7 L4.3,485.5 L2.7,484.9 L0.0,485.5 L-5,485.5 Z" fill="#383838" opacity="0.9" transform="translate(7,7)" filter="url(#blur)"/></g>
<path d="M897.4,0.1 L898.3,2.7 L899.6,4.0 L898.8,8.3 L900.0,9.4 L901.0,12.4 L899.8,14.9 L898.5,16.7 L897.7,20.9 L896.6,23.1 L896.0,24.0 L898.5,26.9 L899.7,27.2 L903.3,29.9 L903.2,33.4 L903.5,36.0 L903.0,38.2 L903.5,41.0 L903.9,41.5 L901.4,44.3 L902.8,47.3 L901.3,49.5 L899.2,52.2 L897.0,55.2 L899.7,57.6 L902.0,59.4 L904.5,61.2 L903.6,61.7 L903.7,66.1 L903.4,67.7 L902.5,69.3 L901.3,72.7 L898.5,74.0 L898.3,78.7 L895.0,80.7 L897.3,81.2 L898.5,84.6 L901.5,84.9 L902.4,86.9 L904.1,89.6 L905.7,93.7 L906.0,96.2 L903.7,96.5 L902.6,98.9 L901.8,102.3 L903.0,104.2 L901.8,108.4 L902.6,111.1 L904.7,112.2 L904.4,115.0 L905.6,117.7 L906.1,120.3 L907.7,122.5 L907.1,125.5 L907.3,127.0 L909.7,130.1 L906.0,130.5 L903.1,133.5 L899.4,135.3 L902.3,136.4 L903.6,139.9 L905.1,142.1 L906.5,145.6 L905.2,146.4 L907.1,151.1 L906.5,152.4 L907.6,154.6 L904.6,155.7 L902.1,157.6 L899.4,158.2 L898.0,158.5 L895.0,161.4 L891.8,161.3 L895.2,162.9 L895.9,164.8 L899.3,165.5 L900.6,167.6 L903.1,170.2 L904.5,171.9 L904.6,175.4 L905.3,177.4 L903.0,179.1 L903.1,181.8 L903.1,185.8 L903.2,186.5 L906.2,189.3 L907.7,190.6 L907.6,192.5 L910.7,194.5 L908.8,197.3 L908.1,199.8 L908.5,201.7 L905.5,206.1 L906.7,208.7 L904.8,211.1 L904.5,211.3 L902.6,214.8 L900.9,216.0 L898.5,217.6 L896.8,219.0 L896.2,221.5 L898.8,222.6 L901.2,225.8 L903.3,228.0 L905.4,228.9 L905.3,230.9 L907.8,231.5 L908.3,234.7 L907.0,238.3 L906.7,239.4 L905.1,243.3 L904.9,245.7 L905.9,246.8 L907.6,250.8 L908.0,253.2 L911.0,255.7 L908.0,254.7 L904.8,257.5 L900.7,257.0 L898.5,258.4 L896.1,259.1 L894.3,258.8 L894.3,261.1 L896.2,263.0 L900.0,266.9 L899.6,268.0 L902.0,269.6 L904.1,272.0 L906.7,273.0 L907.9,274.6 L905.2,276.1 L904.1,276.7 L900.1,277.2 L898.3,279.3 L896.8,279.7 L894.3,281.3 L890.9,281.7 L888.6,283.5 L890.7,284.9 L893.0,285.2 L895.5,287.7 L896.6,288.4 L899.7,290.9 L899.2,292.1 L897.3,295.5 L894.0,297.1 L891.9,300.4 L891.4,302.9 L894.2,304.0 L896.6,305.4 L897.6,307.0 L899.9,307.5 L904.3,308.9 L903.4,311.4 L906.0,314.0 L904.7,318.0 L905.7,320.4 L907.8,322.8 L906.1,323.8 L903.4,324.0 L901.0,326.7 L898.5,327.3 L896.3,330.9 L892.3,331.0 L891.2,333.8 L892.8,333.4 L895.1,335.5 L898.7,336.1 L900.2,337.3 L902.5,338.4 L904.2,339.8 L908.8,340.7 L910.6,341.2 L908.6,344.8 L906.6,346.4 L904.3,348.8 L903.4,349.8 L899.5,353.4 L899.6,355.0 L899.1,358.0 L899.1,359.4 L899.8,362.7 L900.7,364.4 L902.2,368.6 L901.9,370.5 L901.1,373.3 L900.5,374.4 L898.5,376.4 L898.1,379.7 L896.3,382.2 L895.6,385.7 L893.9,389.7 L893.6,392.2 L895.2,395.5 L897.7,397.5 L898.6,400.5 L900.3,402.3 L900.8,406.1 L901.0,406.9 L901.3,410.5 L903.2,413.6 L904.4,414.4 L904.3,416.9 L905.8,420.5 L908.9,423.5 L908.9,425.9 L910.5,427.3 L912.9,429.0 L911.1,433.3 L911.3,434.7 L911.7,437.9 L910.0,439.6 L910.7,442.5 L909.9,445.2 L911.4,447.2 L910.1,449.1 L908.2,452.9 L906.6,455.9 L907.2,456.5 L906.1,459.7 L904.0,462.7 L901.2,464.6 L900.4,467.0 L896.7,468.6 L895.6,470.1 L891.1,469.7 L890.7,473.0 L891.0,476.6 L890.4,478.2 L890.4,482.1 L889.0,485.5 L889.9,486.4 L890.3,489.2 L888.0,488.2 L887.8,485.4 L885.4,483.0 L881.9,480.2 L877.9,480.9 L876.1,479.8 L872.6,479.6 L867.9,479.8 L868.1,476.2 L865.9,473.9 L862.2,471.9 L858.4,472.2 L856.1,473.2 L852.9,473.4 L849.5,472.1 L846.7,471.9 L845.5,473.9 L841.1,473.2 L838.8,475.1 L837.2,477.0 L834.1,477.6 L832.8,481.1 L832.2,485.5 L828.8,482.6 L827.0,482.1 L823.9,484.1 L821.1,482.9 L817.3,483.5 L814.6,484.6 L811.8,483.1 L809.4,483.6 L805.9,484.3 L801.6,484.5 L800.6,483.7 L797.6,483.5 L794.2,483.6 L791.2,483.4 L790.1,483.1 L787.3,484.2 L785.5,482.1 L782.6,483.1 L778.2,482.2 L776.0,481.3 L774.2,483.0 L771.0,482.6 L769.3,480.6 L767.1,481.5 L764.6,481.5 L761.6,480.3 L759.1,482.7 L756.5,482.5 L753.6,483.7 L749.8,484.3 L747.4,486.3 L744.7,487.1 L743.0,487.3 L739.5,487.7 L736.3,487.3 L734.4,487.3 L730.3,488.9 L728.8,488.0 L725.3,488.8 L723.1,488.5 L718.9,488.9 L718.0,489.1 L714.5,489.7 L711.2,489.8 L708.9,490.0 L705.3,490.0 L702.9,491.1 L699.9,490.2 L699.0,488.2 L697.8,484.5 L694.5,483.8 L691.0,483.5 L688.9,479.8 L686.8,480.2 L684.5,480.8 L680.5,480.3 L679.3,481.0 L676.7,481.6 L675.6,483.6 L672.6,485.9 L672.6,489.2 L670.0,490.3 L668.9,490.5 L666.8,486.3 L663.5,484.6 L661.3,483.9 L658.5,484.7 L658.0,483.0 L655.2,483.6 L651.9,484.7 L649.4,482.6 L644.9,484.0 L644.5,484.4 L641.1,487.9 L638.7,488.5 L637.3,490.8 L636.0,488.8 L632.9,489.4 L630.4,488.2 L627.9,487.0 L624.0,485.9 L622.0,485.5 L617.9,483.8 L617.1,486.5 L615.1,487.5 L612.7,488.6 L610.5,488.6 L607.2,490.8 L605.0,489.6 L601.3,491.7 L599.5,492.2 L597.4,491.1 L594.7,491.6 L590.6,490.6 L587.2,490.5 L586.6,489.7 L582.9,489.6 L579.0,490.8 L577.2,487.7 L574.8,487.4 L573.6,484.3 L570.6,484.9 L568.3,482.3 L566.6,481.1 L564.9,479.5 L562.1,479.3 L558.7,480.4 L557.7,481.7 L553.2,485.1 L551.0,486.2 L548.2,486.4 L546.6,485.4 L545.6,483.0 L544.1,481.6 L541.2,479.1 L539.5,476.0 L538.5,475.2 L535.9,474.5 L532.7,475.4 L530.5,474.7 L527.1,475.9 L523.8,476.2 L522.9,476.1 L520.1,476.8 L516.5,476.4 L515.8,476.6 L511.9,476.1 L508.8,476.4 L507.9,477.8 L505.2,478.5 L502.0,478.4 L499.3,477.3 L497.7,478.5 L495.1,477.6 L492.2,477.5 L491.1,480.8 L487.7,482.9 L485.8,483.0 L485.5,485.5 L483.3,488.5 L480.5,490.8 L479.5,492.1 L477.4,491.1 L476.2,488.3 L472.4,486.5 L471.0,484.3 L468.2,484.1 L467.3,482.9 L465.8,480.9 L461.7,479.5 L459.0,480.5 L457.0,481.0 L454.0,482.0 L451.3,481.4 L450.1,482.5 L446.1,481.5 L444.8,481.2 L440.6,482.8 L439.0,481.7 L435.3,481.7 L434.5,482.1 L432.4,482.8 L429.9,480.8 L425.4,480.6 L423.4,481.2 L420.0,481.5 L417.5,480.8 L415.3,481.8 L413.2,480.4 L409.7,480.6 L409.5,483.4 L408.7,485.8 L405.5,486.3 L405.2,490.1 L403.0,492.3 L400.8,489.6 L397.6,487.6 L396.4,488.3 L394.8,485.9 L391.9,485.6 L389.4,484.6 L385.5,484.2 L382.1,483.2 L380.4,485.0 L377.9,485.3 L375.2,487.2 L374.1,488.9 L372.3,489.9 L368.6,492.6 L366.6,495.1 L365.4,497.0 L362.0,494.1 L359.0,494.6 L355.9,493.2 L353.5,494.0 L349.9,491.7 L348.4,489.6 L347.5,489.0 L344.8,485.5 L343.3,483.7 L339.9,483.6 L337.6,480.6 L337.0,480.5 L333.4,477.4 L331.0,477.9 L328.6,481.0 L325.9,480.3 L323.9,481.0 L322.4,483.7 L320.8,484.5 L318.5,484.1 L314.9,487.4 L312.1,486.9 L310.8,487.9 L308.6,486.0 L305.5,486.8 L303.0,485.3 L300.7,484.1 L299.6,481.9 L296.4,482.2 L296.0,484.3 L292.7,487.7 L292.4,487.6 L290.7,490.6 L287.4,491.4 L284.9,493.5 L282.0,491.4 L279.1,491.4 L277.1,493.3 L273.9,491.6 L273.4,493.5 L271.0,490.7 L267.1,491.5 L265.0,489.9 L262.2,487.3 L259.9,488.1 L258.5,486.7 L255.3,485.7 L252.9,484.7 L250.9,483.4 L247.5,484.7 L245.2,482.4 L242.6,483.5 L238.5,484.0 L236.4,485.3 L236.0,488.0 L233.6,489.1 L229.3,492.8 L229.4,490.7 L227.3,487.3 L225.7,483.9 L223.3,482.4 L219.0,480.2 L216.8,480.1 L214.4,479.7 L211.8,480.5 L210.7,481.4 L207.9,481.2 L203.7,481.7 L200.9,479.9 L198.7,481.6 L195.5,481.5 L192.5,482.8 L190.1,482.0 L187.5,483.4 L185.1,483.9 L181.0,484.4 L177.3,484.2 L176.4,485.4 L171.7,485.9 L170.0,486.1 L167.4,484.2 L165.2,485.7 L162.4,485.6 L160.5,484.3 L156.8,484.6 L154.2,484.2 L152.0,485.4 L149.1,483.6 L145.5,484.1 L143.6,483.6 L139.6,484.0 L138.3,481.4 L137.2,481.7 L135.4,479.4 L134.4,477.7 L132.8,474.9 L130.5,472.3 L129.1,475.0 L126.2,478.3 L123.8,478.8 L123.1,481.8 L119.4,482.6 L117.5,482.7 L116.1,483.4 L112.2,484.1 L110.3,484.5 L108.0,485.2 L105.0,484.1 L103.8,485.8 L99.1,485.4 L98.1,487.0 L94.0,484.8 L92.1,485.7 L90.3,486.6 L86.1,485.6 L83.9,486.6 L80.2,485.3 L77.2,485.8 L74.3,486.3 L72.8,485.3 L69.0,484.4 L67.2,485.8 L64.6,484.2 L62.9,485.0 L59.1,483.8 L55.8,485.5 L52.7,484.6 L51.2,484.2 L48.8,485.5 L46.3,485.1 L42.0,483.4 L39.9,484.0 L36.6,485.4 L33.9,485.3 L33.2,482.3 L30.7,481.8 L26.5,481.7 L23.7,483.0 L22.0,484.3 L20.7,482.9 L17.2,484.2 L12.9,484.5 L9.4,486.2 L7.1,484.7 L4.3,485.5 L2.7,484.9 L0.0,485.5" fill="none" stroke="#3d82d8" stroke-width="1"/>
</svg>
</body></html>
